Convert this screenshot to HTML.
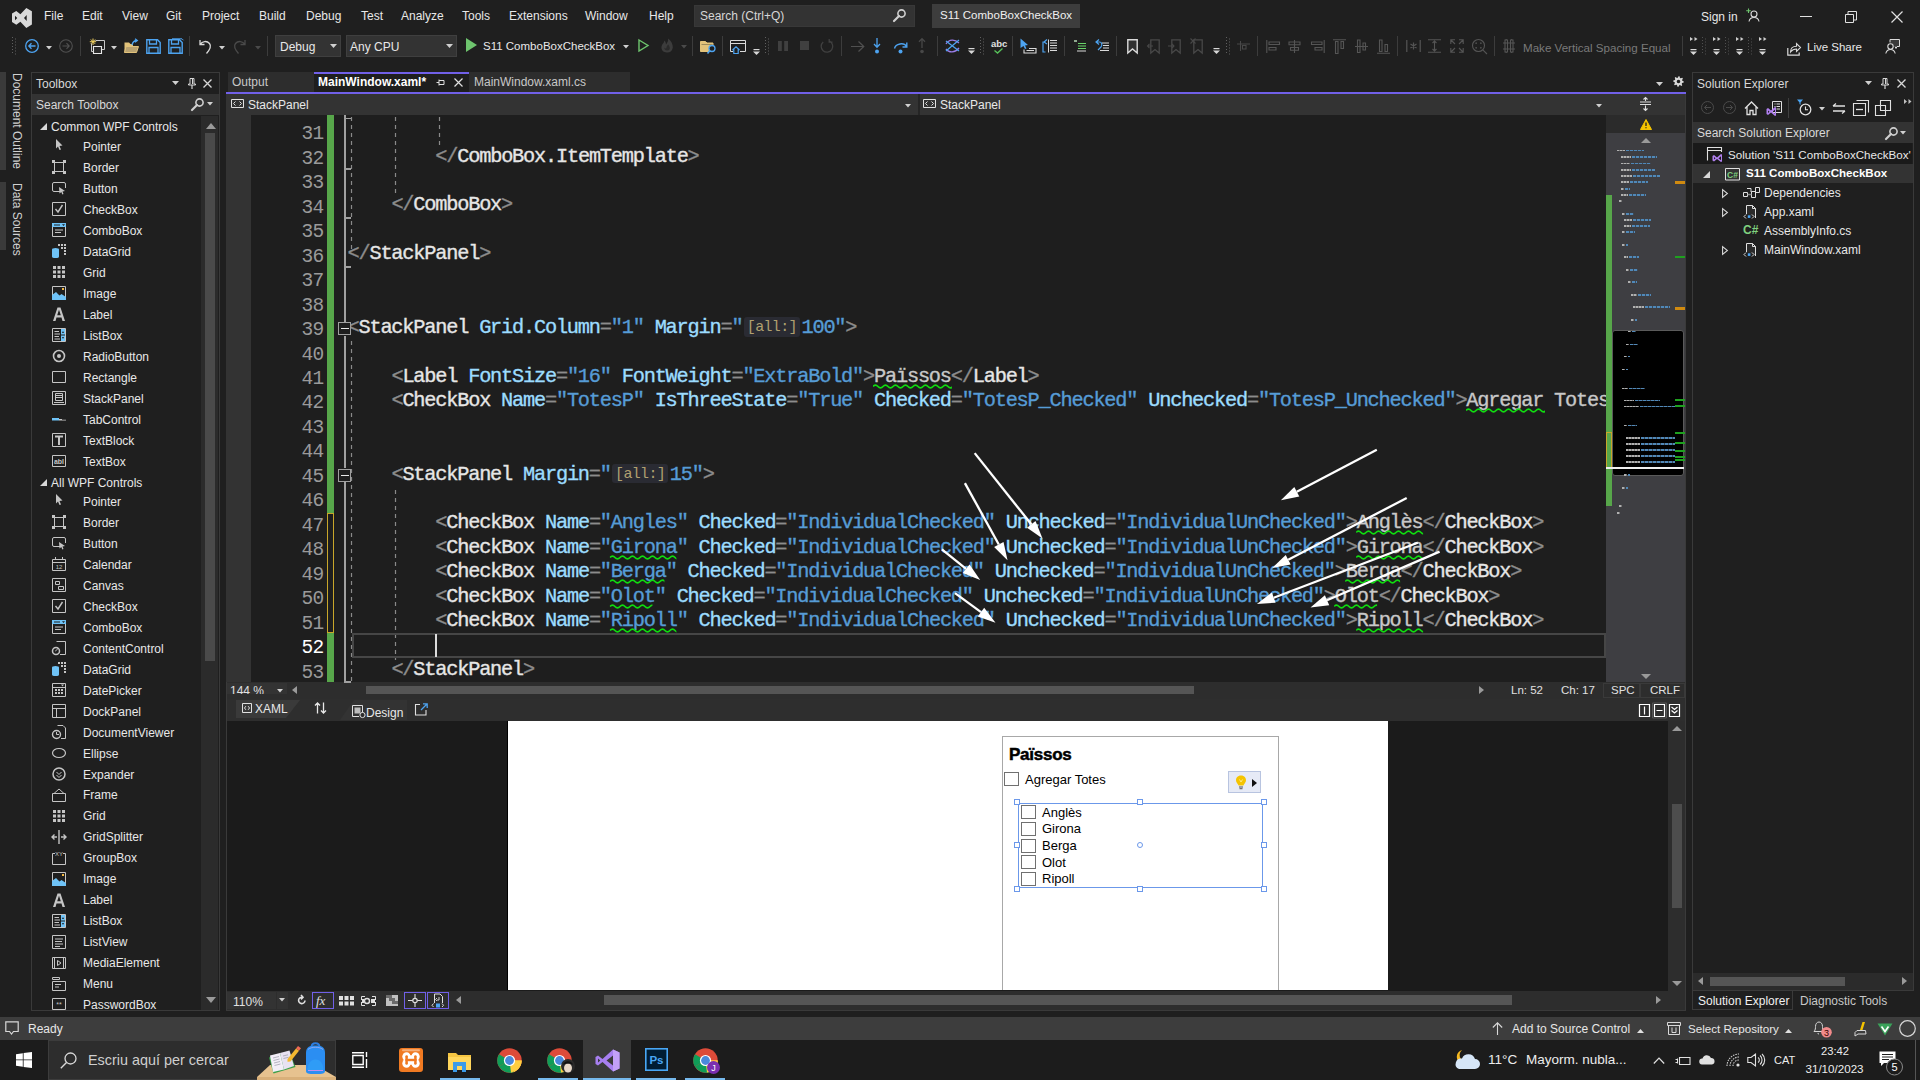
<!DOCTYPE html>
<html><head><meta charset="utf-8">
<style>
*{margin:0;padding:0;box-sizing:border-box}
html,body{width:1920px;height:1080px;overflow:hidden;background:#1f1f1f;font-family:"Liberation Sans",sans-serif;font-size:12px;color:#e6e6e6}
.a{position:absolute}
.t{position:absolute;white-space:nowrap;line-height:1}
svg{position:absolute;overflow:visible}
</style></head><body>

<div class="a" style="left:0px;top:0px;width:1920px;height:62px;background:#1f1f1f;"></div>
<svg style="left:0px;top:0px;" width="40" height="32" viewBox="0 0 40 32"><path d="M12 13.5 L16.3 11 L20.4 14.3 L26.3 7.9 L31.9 11.3 V24.5 L26.3 27.9 L20.4 21.7 L16.3 24.7 L12 22 Z M15 15.8 L17.3 18 L15 20.2 Z M26.7 15 L24 18 L26.7 21 Z" fill="#d9d9d9" fill-rule="evenodd"/></svg>
<div class="t" style="left:44px;top:9.84px;font-size:12px;color:#e8e8e8;font-family:'Liberation Sans',sans-serif;">File</div>
<div class="t" style="left:82px;top:9.84px;font-size:12px;color:#e8e8e8;font-family:'Liberation Sans',sans-serif;">Edit</div>
<div class="t" style="left:122px;top:9.84px;font-size:12px;color:#e8e8e8;font-family:'Liberation Sans',sans-serif;">View</div>
<div class="t" style="left:166px;top:9.84px;font-size:12px;color:#e8e8e8;font-family:'Liberation Sans',sans-serif;">Git</div>
<div class="t" style="left:202px;top:9.84px;font-size:12px;color:#e8e8e8;font-family:'Liberation Sans',sans-serif;">Project</div>
<div class="t" style="left:259px;top:9.84px;font-size:12px;color:#e8e8e8;font-family:'Liberation Sans',sans-serif;">Build</div>
<div class="t" style="left:306px;top:9.84px;font-size:12px;color:#e8e8e8;font-family:'Liberation Sans',sans-serif;">Debug</div>
<div class="t" style="left:361px;top:9.84px;font-size:12px;color:#e8e8e8;font-family:'Liberation Sans',sans-serif;">Test</div>
<div class="t" style="left:401px;top:9.84px;font-size:12px;color:#e8e8e8;font-family:'Liberation Sans',sans-serif;">Analyze</div>
<div class="t" style="left:462px;top:9.84px;font-size:12px;color:#e8e8e8;font-family:'Liberation Sans',sans-serif;">Tools</div>
<div class="t" style="left:509px;top:9.84px;font-size:12px;color:#e8e8e8;font-family:'Liberation Sans',sans-serif;">Extensions</div>
<div class="t" style="left:585px;top:9.84px;font-size:12px;color:#e8e8e8;font-family:'Liberation Sans',sans-serif;">Window</div>
<div class="t" style="left:649px;top:9.84px;font-size:12px;color:#e8e8e8;font-family:'Liberation Sans',sans-serif;">Help</div>
<div class="a" style="left:694px;top:5px;width:221px;height:22px;background:#333333;border:1px solid #383838;"></div>
<div class="t" style="left:700px;top:9.84px;font-size:12px;color:#d6d6d6;font-family:'Liberation Sans',sans-serif;">Search (Ctrl+Q)</div>
<div class="a" style="left:932px;top:4px;width:148px;height:24px;background:#3d3d3d;"></div>
<div class="t" style="left:940px;top:10.27px;font-size:11.5px;color:#f0f0f0;font-family:'Liberation Sans',sans-serif;">S11 ComboBoxCheckBox</div>
<div class="t" style="left:1701px;top:10.84px;font-size:12px;color:#e8e8e8;font-family:'Liberation Sans',sans-serif;">Sign in</div>
<div class="a" style="left:1800px;top:16px;width:12px;height:1px;background:#e0e0e0;"></div>
<svg style="left:1845px;top:11px;" width="12" height="12" viewBox="0 0 12 12"><path d="M0.5 3.5 H8.5 V11.5 H0.5 Z M3 3.5 V0.5 H11.5 V9 H8.5" fill="none" stroke="#e0e0e0" stroke-width="1"/></svg>
<svg style="left:1891px;top:11px;" width="12" height="12" viewBox="0 0 12 12"><path d="M0.5 0.5 L11.5 11.5 M11.5 0.5 L0.5 11.5" stroke="#e0e0e0" stroke-width="1.2"/></svg>
<div class="a" style="left:275px;top:35px;width:66px;height:22px;background:#333333;border:1px solid #3f3f3f;"></div>
<div class="t" style="left:280px;top:40.84px;font-size:12px;color:#e8e8e8;font-family:'Liberation Sans',sans-serif;">Debug</div>
<svg style="left:330px;top:44px;" width="7" height="4" viewBox="0 0 7 4"><path d="M0 0 H7 L3.5 4 Z" fill="#d0d0d0"/></svg>
<div class="a" style="left:346px;top:35px;width:111px;height:22px;background:#333333;border:1px solid #3f3f3f;"></div>
<div class="t" style="left:350px;top:40.84px;font-size:12px;color:#e8e8e8;font-family:'Liberation Sans',sans-serif;">Any CPU</div>
<svg style="left:446px;top:44px;" width="7" height="4" viewBox="0 0 7 4"><path d="M0 0 H7 L3.5 4 Z" fill="#d0d0d0"/></svg>
<svg style="left:466px;top:38px;" width="11" height="14" viewBox="0 0 11 14"><path d="M0 0 L11 7 L0 14 Z" fill="#6ec46e"/></svg>
<div class="t" style="left:483px;top:41.27px;font-size:11.5px;color:#e8e8e8;font-family:'Liberation Sans',sans-serif;">S11 ComboBoxCheckBox</div>
<div class="t" style="left:1523px;top:42.18px;font-size:11.6px;color:#7a7a7a;font-family:'Liberation Sans',sans-serif;">Make Vertical Spacing Equal</div>
<div class="t" style="left:1807px;top:42.27px;font-size:11.5px;color:#e8e8e8;font-family:'Liberation Sans',sans-serif;">Live Share</div>
<div class="a" style="left:0px;top:72px;width:6px;height:98px;background:#3a3a3a;"></div>
<div class="a" style="left:0px;top:182px;width:6px;height:68px;background:#3a3a3a;"></div>
<div class="t" style="left:0;top:0;font-size:12px;color:#d0d0d0;transform-origin:0 0;transform:translate(23px,73px) rotate(90deg);">Document Outline</div>
<div class="t" style="left:0;top:0;font-size:12px;color:#d0d0d0;transform-origin:0 0;transform:translate(23px,183px) rotate(90deg);">Data Sources</div>
<div class="a" style="left:31px;top:72px;width:189px;height:939px;background:#1f1f1f;border:1px solid #3a3a3a;"></div>
<div class="t" style="left:36px;top:77.84px;font-size:12px;color:#d8d8d8;font-family:'Liberation Sans',sans-serif;">Toolbox</div>
<div class="a" style="left:32px;top:94px;width:187px;height:21px;background:#333333;"></div>
<div class="t" style="left:36px;top:98.84px;font-size:12px;color:#d8d8d8;font-family:'Liberation Sans',sans-serif;">Search Toolbox</div>
<div class="a" style="left:201px;top:116px;width:17px;height:894px;background:#2b2b2b;"></div>
<div class="a" style="left:205px;top:133px;width:10px;height:528px;background:#4a4a4a;"></div>
<div class="t" style="left:51px;top:120.84px;font-size:12px;color:#e8e8e8;font-family:'Liberation Sans',sans-serif;">Common WPF Controls</div>
<svg style="left:40px;top:123px;" width="7" height="7" viewBox="0 0 7 7"><path d="M7 0 V7 H0 Z" fill="#d8d8d8"/></svg>
<div class="t" style="left:83px;top:141.04px;font-size:12px;color:#e8e8e8;font-family:'Liberation Sans',sans-serif;">Pointer</div>
<div class="t" style="left:83px;top:162.02px;font-size:12px;color:#e8e8e8;font-family:'Liberation Sans',sans-serif;">Border</div>
<div class="t" style="left:83px;top:183.00px;font-size:12px;color:#e8e8e8;font-family:'Liberation Sans',sans-serif;">Button</div>
<div class="t" style="left:83px;top:203.98px;font-size:12px;color:#e8e8e8;font-family:'Liberation Sans',sans-serif;">CheckBox</div>
<div class="t" style="left:83px;top:224.96px;font-size:12px;color:#e8e8e8;font-family:'Liberation Sans',sans-serif;">ComboBox</div>
<div class="t" style="left:83px;top:245.94px;font-size:12px;color:#e8e8e8;font-family:'Liberation Sans',sans-serif;">DataGrid</div>
<div class="t" style="left:83px;top:266.92px;font-size:12px;color:#e8e8e8;font-family:'Liberation Sans',sans-serif;">Grid</div>
<div class="t" style="left:83px;top:287.90px;font-size:12px;color:#e8e8e8;font-family:'Liberation Sans',sans-serif;">Image</div>
<div class="t" style="left:83px;top:308.88px;font-size:12px;color:#e8e8e8;font-family:'Liberation Sans',sans-serif;">Label</div>
<div class="t" style="left:83px;top:329.86px;font-size:12px;color:#e8e8e8;font-family:'Liberation Sans',sans-serif;">ListBox</div>
<div class="t" style="left:83px;top:350.84px;font-size:12px;color:#e8e8e8;font-family:'Liberation Sans',sans-serif;">RadioButton</div>
<div class="t" style="left:83px;top:371.82px;font-size:12px;color:#e8e8e8;font-family:'Liberation Sans',sans-serif;">Rectangle</div>
<div class="t" style="left:83px;top:392.80px;font-size:12px;color:#e8e8e8;font-family:'Liberation Sans',sans-serif;">StackPanel</div>
<div class="t" style="left:83px;top:413.78px;font-size:12px;color:#e8e8e8;font-family:'Liberation Sans',sans-serif;">TabControl</div>
<div class="t" style="left:83px;top:434.76px;font-size:12px;color:#e8e8e8;font-family:'Liberation Sans',sans-serif;">TextBlock</div>
<div class="t" style="left:83px;top:455.74px;font-size:12px;color:#e8e8e8;font-family:'Liberation Sans',sans-serif;">TextBox</div>
<div class="t" style="left:51px;top:476.84px;font-size:12px;color:#e8e8e8;font-family:'Liberation Sans',sans-serif;">All WPF Controls</div>
<svg style="left:40px;top:479px;" width="7" height="7" viewBox="0 0 7 7"><path d="M7 0 V7 H0 Z" fill="#d8d8d8"/></svg>
<div class="t" style="left:83px;top:496.04px;font-size:12px;color:#e8e8e8;font-family:'Liberation Sans',sans-serif;">Pointer</div>
<div class="t" style="left:83px;top:517.00px;font-size:12px;color:#e8e8e8;font-family:'Liberation Sans',sans-serif;">Border</div>
<div class="t" style="left:83px;top:537.96px;font-size:12px;color:#e8e8e8;font-family:'Liberation Sans',sans-serif;">Button</div>
<div class="t" style="left:83px;top:558.92px;font-size:12px;color:#e8e8e8;font-family:'Liberation Sans',sans-serif;">Calendar</div>
<div class="t" style="left:83px;top:579.88px;font-size:12px;color:#e8e8e8;font-family:'Liberation Sans',sans-serif;">Canvas</div>
<div class="t" style="left:83px;top:600.84px;font-size:12px;color:#e8e8e8;font-family:'Liberation Sans',sans-serif;">CheckBox</div>
<div class="t" style="left:83px;top:621.80px;font-size:12px;color:#e8e8e8;font-family:'Liberation Sans',sans-serif;">ComboBox</div>
<div class="t" style="left:83px;top:642.76px;font-size:12px;color:#e8e8e8;font-family:'Liberation Sans',sans-serif;">ContentControl</div>
<div class="t" style="left:83px;top:663.72px;font-size:12px;color:#e8e8e8;font-family:'Liberation Sans',sans-serif;">DataGrid</div>
<div class="t" style="left:83px;top:684.68px;font-size:12px;color:#e8e8e8;font-family:'Liberation Sans',sans-serif;">DatePicker</div>
<div class="t" style="left:83px;top:705.64px;font-size:12px;color:#e8e8e8;font-family:'Liberation Sans',sans-serif;">DockPanel</div>
<div class="t" style="left:83px;top:726.60px;font-size:12px;color:#e8e8e8;font-family:'Liberation Sans',sans-serif;">DocumentViewer</div>
<div class="t" style="left:83px;top:747.56px;font-size:12px;color:#e8e8e8;font-family:'Liberation Sans',sans-serif;">Ellipse</div>
<div class="t" style="left:83px;top:768.52px;font-size:12px;color:#e8e8e8;font-family:'Liberation Sans',sans-serif;">Expander</div>
<div class="t" style="left:83px;top:789.48px;font-size:12px;color:#e8e8e8;font-family:'Liberation Sans',sans-serif;">Frame</div>
<div class="t" style="left:83px;top:810.44px;font-size:12px;color:#e8e8e8;font-family:'Liberation Sans',sans-serif;">Grid</div>
<div class="t" style="left:83px;top:831.40px;font-size:12px;color:#e8e8e8;font-family:'Liberation Sans',sans-serif;">GridSplitter</div>
<div class="t" style="left:83px;top:852.36px;font-size:12px;color:#e8e8e8;font-family:'Liberation Sans',sans-serif;">GroupBox</div>
<div class="t" style="left:83px;top:873.32px;font-size:12px;color:#e8e8e8;font-family:'Liberation Sans',sans-serif;">Image</div>
<div class="t" style="left:83px;top:894.28px;font-size:12px;color:#e8e8e8;font-family:'Liberation Sans',sans-serif;">Label</div>
<div class="t" style="left:83px;top:915.24px;font-size:12px;color:#e8e8e8;font-family:'Liberation Sans',sans-serif;">ListBox</div>
<div class="t" style="left:83px;top:936.20px;font-size:12px;color:#e8e8e8;font-family:'Liberation Sans',sans-serif;">ListView</div>
<div class="t" style="left:83px;top:957.16px;font-size:12px;color:#e8e8e8;font-family:'Liberation Sans',sans-serif;">MediaElement</div>
<div class="t" style="left:83px;top:978.12px;font-size:12px;color:#e8e8e8;font-family:'Liberation Sans',sans-serif;">Menu</div>
<div class="t" style="left:83px;top:999.08px;font-size:12px;color:#e8e8e8;font-family:'Liberation Sans',sans-serif;">PasswordBox</div>
<div class="a" style="left:32px;top:1010px;width:187px;height:1px;background:#3a3a3a;"></div>
<div class="a" style="left:226px;top:72px;width:1460px;height:939px;background:#1e1e1e;"></div>
<div class="a" style="left:226px;top:72px;width:1460px;height:20px;background:#1f1f1f;"></div>
<div class="a" style="left:228px;top:72px;width:86px;height:20px;background:#2d2d2d;"></div>
<div class="t" style="left:232px;top:76.34px;font-size:12px;color:#c8c8c8;font-family:'Liberation Sans',sans-serif;">Output</div>
<div class="a" style="left:314px;top:72px;width:155px;height:20px;background:#1e1e1e;"></div>
<div class="a" style="left:314px;top:72px;width:155px;height:2px;background:#7160e8;"></div>
<div class="t" style="left:318px;top:76.34px;font-size:12px;color:#ffffff;font-family:'Liberation Sans',sans-serif;font-weight:bold;">MainWindow.xaml*</div>
<div class="a" style="left:469px;top:72px;width:161px;height:20px;background:#2d2d2d;"></div>
<div class="t" style="left:474px;top:76.34px;font-size:12px;color:#c8c8c8;font-family:'Liberation Sans',sans-serif;">MainWindow.xaml.cs</div>
<div class="a" style="left:226px;top:92px;width:1460px;height:2px;background:#7160e8;"></div>
<div class="a" style="left:226px;top:94px;width:1460px;height:21px;background:#333333;"></div>
<div class="a" style="left:918px;top:94px;width:2px;height:21px;background:#252525;"></div>
<div class="a" style="left:1606px;top:94px;width:2px;height:21px;background:#252525;"></div>
<div class="t" style="left:248px;top:98.84px;font-size:12px;color:#e8e8e8;font-family:'Liberation Sans',sans-serif;">StackPanel</div>
<div class="t" style="left:940px;top:98.84px;font-size:12px;color:#e8e8e8;font-family:'Liberation Sans',sans-serif;">StackPanel</div>
<div class="a" style="left:226px;top:115px;width:1380px;height:567px;background:#1e1e1e;"></div>
<div class="a" style="left:226px;top:115px;width:25px;height:567px;background:#333333;"></div>
<div class="a" style="left:1606px;top:115px;width:80px;height:18px;background:#2b2b2b;"></div>
<div class="a" style="left:1606px;top:133px;width:80px;height:549px;background:#3e3e42;"></div>
<div class="a" style="left:226px;top:682px;width:1460px;height:12px;background:#2d2d2d;"></div>
<div class="a" style="left:227px;top:683px;width:60px;height:15px;background:#333333;"></div>
<div class="t" style="left:230px;top:684.84px;font-size:12px;color:#e0e0e0;font-family:'Liberation Sans',sans-serif;">144 %</div>
<div class="a" style="left:366px;top:686px;width:828px;height:8px;background:#555555;"></div>
<div class="a" style="left:226px;top:694px;width:1460px;height:5px;background:#2d2d2d;"></div>
<div class="a" style="left:1500px;top:682px;width:186px;height:17px;background:#2d2d2d;"></div>
<div class="t" style="left:1511px;top:685.27px;font-size:11.5px;color:#e0e0e0;font-family:'Liberation Sans',sans-serif;">Ln: 52</div>
<div class="t" style="left:1561px;top:685.27px;font-size:11.5px;color:#e0e0e0;font-family:'Liberation Sans',sans-serif;">Ch: 17</div>
<div class="t" style="left:1611px;top:685.27px;font-size:11.5px;color:#e0e0e0;font-family:'Liberation Sans',sans-serif;">SPC</div>
<div class="t" style="left:1650px;top:685.27px;font-size:11.5px;color:#e0e0e0;font-family:'Liberation Sans',sans-serif;">CRLF</div>
<div class="a" style="left:226px;top:699px;width:1460px;height:22px;background:#2e2e2e;"></div>
<div class="a" style="left:226px;top:721px;width:1442px;height:270px;background:#1b1b1b;"></div>
<div class="a" style="left:507px;top:721px;width:881px;height:269px;background:#ffffff;"></div>
<div class="a" style="left:507px;top:721px;width:1px;height:269px;background:#000000;"></div>
<div class="a" style="left:1668px;top:721px;width:18px;height:270px;background:#2d2d2d;"></div>
<div class="a" style="left:1672px;top:804px;width:10px;height:104px;background:#4d4d4d;"></div>
<div class="a" style="left:226px;top:991px;width:1460px;height:20px;background:#2d2d2d;"></div>
<div class="a" style="left:227px;top:992px;width:61px;height:17px;background:#333333;"></div>
<div class="t" style="left:233px;top:995.84px;font-size:12px;color:#e0e0e0;font-family:'Liberation Sans',sans-serif;">110%</div>
<div class="a" style="left:604px;top:995px;width:908px;height:10px;background:#555555;"></div>
<div class="a" style="left:1692px;top:72px;width:222px;height:919px;background:#1f1f1f;border:1px solid #3a3a3a;"></div>
<div class="t" style="left:1697px;top:77.84px;font-size:12px;color:#d8d8d8;font-family:'Liberation Sans',sans-serif;">Solution Explorer</div>
<div class="a" style="left:1693px;top:122px;width:220px;height:21px;background:#333333;"></div>
<div class="t" style="left:1697px;top:126.84px;font-size:12px;color:#d8d8d8;font-family:'Liberation Sans',sans-serif;">Search Solution Explorer</div>
<div class="a" style="left:1693px;top:143px;width:220px;height:21px;background:#1a1a1a;"></div>
<div class="t" style="left:1728px;top:149.18px;font-size:11.6px;color:#e8e8e8;font-family:'Liberation Sans',sans-serif;">Solution &#x27;S11 ComboBoxCheckBox&#x27;</div>
<div class="a" style="left:1693px;top:164px;width:220px;height:19px;background:#333333;"></div>
<div class="t" style="left:1746px;top:168.22px;font-size:11.55px;color:#ffffff;font-family:'Liberation Sans',sans-serif;font-weight:bold;">S11 ComboBoxCheckBox</div>
<div class="t" style="left:1764px;top:186.84px;font-size:12px;color:#e8e8e8;font-family:'Liberation Sans',sans-serif;">Dependencies</div>
<div class="t" style="left:1764px;top:205.84px;font-size:12px;color:#e8e8e8;font-family:'Liberation Sans',sans-serif;">App.xaml</div>
<div class="t" style="left:1764px;top:224.84px;font-size:12px;color:#e8e8e8;font-family:'Liberation Sans',sans-serif;">AssemblyInfo.cs</div>
<div class="t" style="left:1764px;top:243.84px;font-size:12px;color:#e8e8e8;font-family:'Liberation Sans',sans-serif;">MainWindow.xaml</div>
<div class="a" style="left:1693px;top:973px;width:220px;height:17px;background:#2b2b2b;"></div>
<div class="a" style="left:1710px;top:977px;width:135px;height:9px;background:#555555;"></div>
<div class="a" style="left:1692px;top:990px;width:101px;height:20px;background:#1f1f1f;border:1px solid #3a3a3a;"></div>
<div class="t" style="left:1698px;top:994.84px;font-size:12px;color:#f0f0f0;font-family:'Liberation Sans',sans-serif;">Solution Explorer</div>
<div class="t" style="left:1800px;top:994.84px;font-size:12px;color:#c8c8c8;font-family:'Liberation Sans',sans-serif;">Diagnostic Tools</div>
<div class="a" style="left:0px;top:1017px;width:1920px;height:23px;background:#3d3d3d;"></div>
<svg style="left:5px;top:1021px;" width="15" height="15" viewBox="0 0 15 15"><path d="M0.8 0.8 H13.2 V10.5 H8.5 L6.5 13 L4.5 10.5 H0.8 Z" fill="none" stroke="#d8d8d8" stroke-width="1.2"/></svg>
<div class="t" style="left:28px;top:1022.84px;font-size:12px;color:#e8e8e8;font-family:'Liberation Sans',sans-serif;">Ready</div>
<svg style="left:1492px;top:1022px;" width="11" height="13" viewBox="0 0 11 13"><path d="M5.5 13 V1 M0.8 5.5 L5.5 0.8 L10.2 5.5" fill="none" stroke="#d8d8d8" stroke-width="1.1"/></svg>
<div class="t" style="left:1512px;top:1022.84px;font-size:12px;color:#e8e8e8;font-family:'Liberation Sans',sans-serif;">Add to Source Control</div>
<svg style="left:1637px;top:1029px;" width="7" height="4" viewBox="0 0 7 4"><path d="M0 4 L3.5 0 L7 4 Z" fill="#e0e0e0"/></svg>
<svg style="left:1667px;top:1022px;" width="14" height="13" viewBox="0 0 14 13"><path d="M0.5 0.5 H13.5 V3.5 H0.5 Z M1.5 3.5 V12.5 H12.5 V3.5 M5 5.5 V10.5 H9 V5.5" fill="none" stroke="#d8d8d8" stroke-width="1"/></svg>
<div class="t" style="left:1688px;top:1023.18px;font-size:11.6px;color:#e8e8e8;font-family:'Liberation Sans',sans-serif;">Select Repository</div>
<svg style="left:1785px;top:1029px;" width="7" height="4" viewBox="0 0 7 4"><path d="M0 4 L3.5 0 L7 4 Z" fill="#e0e0e0"/></svg>
<svg style="left:1813px;top:1021px;" width="20" height="17" viewBox="0 0 20 17"><path d="M1 10.5 H11 C9.5 9 9.5 7 9.5 5.5 C9.5 2.8 8 1 6 1 C4 1 2.5 2.8 2.5 5.5 C2.5 7 2.5 9 1 10.5 Z M4.8 12 C5 12.8 5.5 13.2 6 13.2" fill="none" stroke="#d8d8d8" stroke-width="1"/><circle cx="13.5" cy="11.2" r="5.3" fill="#f28b8b"/><text x="13.5" y="14.6" font-size="9" font-family="Liberation Sans" fill="#3a0000" text-anchor="middle">3</text></svg>
<svg style="left:1854px;top:1021px;" width="13" height="16" viewBox="0 0 13 16"><path d="M1 15 V11.5 L3 9.5 H11.5 L12 13 H4 Z" fill="none" stroke="#d8d8d8" stroke-width="1"/><path d="M6 9 L8.5 1 H11 L8.5 9 Z" fill="#f5c400"/></svg>
<svg style="left:1877px;top:1023px;" width="16" height="13" viewBox="0 0 16 13"><path d="M0.5 0.5 H15.5 L8 12.5 Z" fill="#3aa35a"/><path d="M4.5 3.5 L8 8.5 L11.5 3.5" fill="none" stroke="#ffffff" stroke-width="1.6"/></svg>
<svg style="left:1899px;top:1020px;" width="17" height="17" viewBox="0 0 17 17"><circle cx="8.5" cy="8.5" r="7.8" fill="none" stroke="#d8d8d8" stroke-width="1.2"/></svg>
<div class="a" style="left:0px;top:1040px;width:1920px;height:40px;background:#1c1c1c;"></div>
<svg style="left:16px;top:1052px;" width="16" height="16" viewBox="0 0 16 16"><path d="M0 2.2 L6.8 1.2 V7.5 H0 Z M7.6 1.1 L16 0 V7.5 H7.6 Z M0 8.3 H6.8 V14.8 L0 13.8 Z M7.6 8.3 H16 V16 L7.6 14.9 Z" fill="#ffffff"/></svg>
<div class="a" style="left:48px;top:1040px;width:288px;height:40px;background:#2d2d2d;border:1px solid #3c3c3c;"></div>
<svg style="left:60px;top:1052px;" width="17" height="17" viewBox="0 0 17 17"><circle cx="10.5" cy="6.5" r="5.5" fill="none" stroke="#d8d8d8" stroke-width="1.3"/><path d="M6.5 10.5 L0.8 16.2" stroke="#d8d8d8" stroke-width="1.4"/></svg>
<div class="t" style="left:88px;top:1053.31px;font-size:14.4px;color:#cfcfcf;font-family:'Liberation Sans',sans-serif;">Escriu aquí per cercar</div>
<svg style="left:250px;top:1040px;" width="90" height="40" viewBox="0 0 90 40"><path d="M20 25 H65 L86 37 V40 H7 V37 Z" fill="#e7c28f"/><path d="M7 37 H86 V40 H7 Z" fill="#d9b07a"/><path d="M19 17.5 L39 11 L45.5 27 L23.5 33.5 Z" fill="#3aa04a"/><path d="M20 15.5 L30 13 L34 29.5 L23 32 Z" fill="#f3eef8"/><path d="M30 13 L39.5 10.5 L44 26 L34 29.5 Z" fill="#e8e2f2"/><path d="M23 18 L29 16.5 M23.5 20.5 L29.5 19 M24 23 L30 21.5 M24.5 25.5 L30.5 24 M33 16 L38 14.8 M33.5 18.5 L38.5 17.3" stroke="#9a9aa8" stroke-width="0.7"/><path d="M37.5 19 L46 8.5 L49 10.8 L40.5 21.5 L37.5 21.8 Z" fill="#f2b830"/><path d="M46 8.5 L48 6 L51 8.3 L49 10.8 Z" fill="#ee6a55"/><path d="M61.5 7 C61.5 2 69.5 2 69.5 7" fill="none" stroke="#2d7ee0" stroke-width="1.8"/><path d="M56 13 C56 7 59.5 5.5 65.5 5.5 C71.5 5.5 75 7 75 13 V31 C75 33.5 73 34 65.5 34 C58 34 56 33.5 56 31 Z" fill="#2b8ef2"/><path d="M58 9.5 C61 6.5 70 6.5 73 9.5" fill="none" stroke="#c9b8f0" stroke-width="0.6"/><path d="M57.5 30.5 C57.5 24 60.5 19.5 65.5 19.5 C70.5 19.5 73.5 24 73.5 30.5" fill="#2f9cf6"/><path d="M58 30.5 H73" stroke="#e58ef0" stroke-width="0.8"/></svg>
<svg style="left:352px;top:1052px;" width="16" height="16" viewBox="0 0 16 16"><path d="M0.8 3.5 H11.2 V12.5 H0.8 Z M0 0.8 H12 M0 15.2 H12 M14.5 0 V5 M14.5 7 V16" fill="none" stroke="#ffffff" stroke-width="1.4"/></svg>
<svg style="left:399px;top:1048px;" width="24" height="24" viewBox="0 0 24 24"><rect x="0" y="0" width="24" height="24" rx="3" fill="#f07a22"/><rect x="3" y="1.2" width="18" height="2" rx="1" fill="#f6b07a"/><g fill="#ffffff"><circle cx="7.6" cy="8.6" r="4.3"/><circle cx="7.6" cy="15.4" r="4.3"/><circle cx="16.4" cy="8.6" r="4.3"/><circle cx="16.4" cy="15.4" r="4.3"/><rect x="7.6" y="7" width="8.8" height="10"/></g><g fill="#f07a22"><path d="M9.5 4 L12 7.8 L14.5 4 Z M9.5 20 L12 16.2 L14.5 20 Z"/><rect x="6.4" y="8.6" width="2.4" height="6.8"/><rect x="15.2" y="8.6" width="2.4" height="6.8"/><rect x="6.4" y="10.8" width="11.2" height="2.4"/><circle cx="7.6" cy="8.6" r="1.25"/><circle cx="7.6" cy="15.4" r="1.25"/><circle cx="16.4" cy="8.6" r="1.25"/><circle cx="16.4" cy="15.4" r="1.25"/></g></svg>
<svg style="left:448px;top:1051px;" width="23" height="21" viewBox="0 0 23 21"><path d="M0 2 H8 L10 4 H23 V19 H0 Z" fill="#f5c542"/><path d="M0 6 H23 V19 H0 Z" fill="#ffd65c"/><path d="M5 11 H18 V21 H14 V15 H9 V21 H5 Z" fill="#3b9ae8"/></svg>
<svg style="left:497px;top:1048px;" width="25" height="25" viewBox="0 0 25 25"><circle cx="12.5" cy="12.5" r="12.2" fill="#dd4b39"/><path d="M12.5 12.5 L1.9 18.6 A12.2 12.2 0 0 1 2 6.2 Z" fill="#109d58"/><path d="M12.5 12.5 L1.9 18.6 A12.2 12.2 0 0 0 17 23.9 Z" fill="#109d58"/><path d="M12.5 12.5 L24.7 12.5 A12.2 12.2 0 0 1 12.5 24.7 L17 23.9 Z" fill="#ffcd40"/><path d="M12.5 12.5 H24.7 A12.2 12.2 0 0 1 14 24.6 Z" fill="#ffcd40"/><circle cx="12.5" cy="12.5" r="5.6" fill="#ffffff"/><circle cx="12.5" cy="12.5" r="4.4" fill="#4a89dc"/></svg>
<svg style="left:547px;top:1048px;" width="25" height="25" viewBox="0 0 25 25"><circle cx="12.5" cy="12.5" r="12.2" fill="#dd4b39"/><path d="M12.5 12.5 L1.9 18.6 A12.2 12.2 0 0 1 2 6.2 Z" fill="#109d58"/><path d="M12.5 12.5 L1.9 18.6 A12.2 12.2 0 0 0 17 23.9 Z" fill="#109d58"/><path d="M12.5 12.5 L24.7 12.5 A12.2 12.2 0 0 1 12.5 24.7 L17 23.9 Z" fill="#ffcd40"/><path d="M12.5 12.5 H24.7 A12.2 12.2 0 0 1 14 24.6 Z" fill="#ffcd40"/><circle cx="12.5" cy="12.5" r="5.6" fill="#ffffff"/><circle cx="12.5" cy="12.5" r="4.4" fill="#4a89dc"/></svg>
<svg style="left:693px;top:1048px;" width="25" height="25" viewBox="0 0 25 25"><circle cx="12.5" cy="12.5" r="12.2" fill="#dd4b39"/><path d="M12.5 12.5 L1.9 18.6 A12.2 12.2 0 0 1 2 6.2 Z" fill="#109d58"/><path d="M12.5 12.5 L1.9 18.6 A12.2 12.2 0 0 0 17 23.9 Z" fill="#109d58"/><path d="M12.5 12.5 L24.7 12.5 A12.2 12.2 0 0 1 12.5 24.7 L17 23.9 Z" fill="#ffcd40"/><path d="M12.5 12.5 H24.7 A12.2 12.2 0 0 1 14 24.6 Z" fill="#ffcd40"/><circle cx="12.5" cy="12.5" r="5.6" fill="#ffffff"/><circle cx="12.5" cy="12.5" r="4.4" fill="#4a89dc"/></svg>
<svg style="left:561px;top:1059px;" width="14" height="14" viewBox="0 0 14 14"><circle cx="7" cy="7" r="7" fill="#2a2a2a"/><ellipse cx="7" cy="9" rx="4" ry="4.5" fill="#e8d8c8"/><path d="M2 6 C3 1 11 1 12 6 C10 4 4 4 2 6 Z" fill="#111"/></svg>
<svg style="left:707px;top:1061px;" width="13" height="13" viewBox="0 0 13 13"><circle cx="6.5" cy="6.5" r="6.5" fill="#7b2fb0"/><text x="6.5" y="10" font-size="9" font-family="Liberation Sans" fill="#fff" text-anchor="middle">J</text></svg>
<div class="a" style="left:583px;top:1040px;width:48px;height:40px;background:#3a3a3a;"></div>
<svg style="left:595px;top:1049px;" width="25" height="23" viewBox="0 0 25 23"><path d="M18 0.5 L24.5 3.5 V19.5 L18 22.5 L7.5 13 L3 16.5 L0.5 15 V8 L3 6.5 L7.5 10 Z M18 6.5 L11.5 11.5 L18 16.5 Z M3 9.5 V13.5 L5.3 11.5 Z" fill="#a77ff0" fill-rule="evenodd"/><path d="M18 0.5 L24.5 3.5 V19.5 L18 22.5 Z" fill="#c2a0f8"/></svg>
<svg style="left:645px;top:1048px;" width="23" height="23" viewBox="0 0 23 23"><rect x="0.8" y="0.8" width="21.4" height="21.4" fill="#001d34" stroke="#49a7f5" stroke-width="1.6"/><text x="11.5" y="16" font-size="11.5" font-weight="bold" font-family="Liberation Sans" fill="#49a7f5" text-anchor="middle">Ps</text></svg>
<div class="a" style="left:440px;top:1078px;width:40px;height:2px;background:#76b9ed;"></div>
<div class="a" style="left:538px;top:1078px;width:40px;height:2px;background:#76b9ed;"></div>
<div class="a" style="left:583px;top:1078px;width:48px;height:2px;background:#76b9ed;"></div>
<div class="a" style="left:636px;top:1078px;width:40px;height:2px;background:#76b9ed;"></div>
<div class="a" style="left:685px;top:1078px;width:40px;height:2px;background:#76b9ed;"></div>
<svg style="left:1453px;top:1047px;" width="27" height="24" viewBox="0 0 27 24"><path d="M9 3 A7 7 0 1 0 17 13 A6 6 0 0 1 9 3 Z" fill="#f5b820"/><path d="M6 22 H22 A5 5 0 0 0 22 12 A7 7 0 0 0 9 11.5 A5.5 5.5 0 0 0 6 22 Z" fill="#d6e6f8"/></svg>
<div class="t" style="left:1488px;top:1053.27px;font-size:13.5px;color:#ececec;font-family:'Liberation Sans',sans-serif;">11°C</div>
<div class="t" style="left:1526px;top:1053.27px;font-size:13.5px;color:#ececec;font-family:'Liberation Sans',sans-serif;">Mayorm. nubla...</div>
<svg style="left:1653px;top:1057px;" width="12" height="7" viewBox="0 0 12 7"><path d="M0.8 6.5 L6 1 L11.2 6.5" fill="none" stroke="#e0e0e0" stroke-width="1.2"/></svg>
<svg style="left:1675px;top:1054px;" width="16" height="13" viewBox="0 0 16 13"><path d="M4.5 3.5 H15 V10.5 H4.5 Z M2.5 5.5 H0.5 M2.5 8.5 H0.5 M2.5 4.5 V9.5" fill="none" stroke="#e0e0e0" stroke-width="1.1"/></svg>
<svg style="left:1699px;top:1055px;" width="16" height="10" viewBox="0 0 16 10"><path d="M3 9.5 A3 3 0 0 1 3.5 3.5 A4.5 4.5 0 0 1 12 3 A3.3 3.3 0 0 1 13 9.5 Z" fill="#e0e0e0"/></svg>
<svg style="left:1726px;top:1053px;" width="14" height="14" viewBox="0 0 14 14"><path d="M1 13 A12 12 0 0 1 13 1 M4 13 A9 9 0 0 1 13 4 M7 13 A6 6 0 0 1 13 7" fill="none" stroke="#d0d0d0" stroke-width="1.1" stroke-dasharray="1.5 1"/><circle cx="12" cy="12" r="1.6" fill="#e0e0e0"/></svg>
<svg style="left:1747px;top:1053px;" width="17" height="14" viewBox="0 0 17 14"><path d="M0.8 4.5 H4 L8.5 1 V13 L4 9.5 H0.8 Z M11 4.5 A3 3 0 0 1 11 9.5 M13 2.5 A6 6 0 0 1 13 11.5 M15 1 A8 8 0 0 1 15 13" fill="none" stroke="#e0e0e0" stroke-width="1.1"/></svg>
<div class="t" style="left:1774px;top:1054.89px;font-size:11px;color:#ececec;font-family:'Liberation Sans',sans-serif;">CAT</div>
<div class="t" style="left:1821px;top:1045.52px;font-size:11.2px;color:#ececec;font-family:'Liberation Sans',sans-serif;">23:42</div>
<div class="t" style="left:1805.5px;top:1062.88px;font-size:11.6px;color:#ececec;font-family:'Liberation Sans',sans-serif;">31/10/2023</div>
<svg style="left:1879px;top:1051px;" width="26" height="26" viewBox="0 0 26 26"><path d="M0.5 0.5 H16.5 V12 H5 L2 15 V12 H0.5 Z" fill="#ffffff"/><path d="M3 3.5 H14 M3 6 H14 M3 8.5 H10" stroke="#1c1c1c" stroke-width="1"/><circle cx="15.5" cy="16" r="8" fill="#1c1c1c" stroke="#8a8a8a" stroke-width="1"/><text x="15.5" y="20" font-size="11" font-family="Liberation Sans" fill="#ffffff" text-anchor="middle">5</text></svg>
<div class="a" style="left:1915px;top:1040px;width:1px;height:40px;background:#555555;"></div>
<div class="a" style="left:327px;top:115px;width:7px;height:398px;background:#57a64a;"></div>
<div class="a" style="left:327px;top:513px;width:7px;height:120px;border:1px solid #c8a62a;box-sizing:border-box;"></div>
<div class="a" style="left:327px;top:633px;width:7px;height:49px;background:#57a64a;"></div>
<div class="t" style="left:323.5px;top:125.39px;font-size:19.5px;color:#9a9a9a;font-family:'Liberation Mono',monospace;letter-spacing:-0.7px;transform:translateX(-100%);">31</div>
<div class="t" style="left:323.5px;top:149.85px;font-size:19.5px;color:#9a9a9a;font-family:'Liberation Mono',monospace;letter-spacing:-0.7px;transform:translateX(-100%);">32</div>
<div class="t" style="left:323.5px;top:174.31px;font-size:19.5px;color:#9a9a9a;font-family:'Liberation Mono',monospace;letter-spacing:-0.7px;transform:translateX(-100%);">33</div>
<div class="t" style="left:323.5px;top:198.77px;font-size:19.5px;color:#9a9a9a;font-family:'Liberation Mono',monospace;letter-spacing:-0.7px;transform:translateX(-100%);">34</div>
<div class="t" style="left:323.5px;top:223.23px;font-size:19.5px;color:#9a9a9a;font-family:'Liberation Mono',monospace;letter-spacing:-0.7px;transform:translateX(-100%);">35</div>
<div class="t" style="left:323.5px;top:247.69px;font-size:19.5px;color:#9a9a9a;font-family:'Liberation Mono',monospace;letter-spacing:-0.7px;transform:translateX(-100%);">36</div>
<div class="t" style="left:323.5px;top:272.15px;font-size:19.5px;color:#9a9a9a;font-family:'Liberation Mono',monospace;letter-spacing:-0.7px;transform:translateX(-100%);">37</div>
<div class="t" style="left:323.5px;top:296.61px;font-size:19.5px;color:#9a9a9a;font-family:'Liberation Mono',monospace;letter-spacing:-0.7px;transform:translateX(-100%);">38</div>
<div class="t" style="left:323.5px;top:321.07px;font-size:19.5px;color:#9a9a9a;font-family:'Liberation Mono',monospace;letter-spacing:-0.7px;transform:translateX(-100%);">39</div>
<div class="t" style="left:323.5px;top:345.53px;font-size:19.5px;color:#9a9a9a;font-family:'Liberation Mono',monospace;letter-spacing:-0.7px;transform:translateX(-100%);">40</div>
<div class="t" style="left:323.5px;top:369.99px;font-size:19.5px;color:#9a9a9a;font-family:'Liberation Mono',monospace;letter-spacing:-0.7px;transform:translateX(-100%);">41</div>
<div class="t" style="left:323.5px;top:394.45px;font-size:19.5px;color:#9a9a9a;font-family:'Liberation Mono',monospace;letter-spacing:-0.7px;transform:translateX(-100%);">42</div>
<div class="t" style="left:323.5px;top:418.91px;font-size:19.5px;color:#9a9a9a;font-family:'Liberation Mono',monospace;letter-spacing:-0.7px;transform:translateX(-100%);">43</div>
<div class="t" style="left:323.5px;top:443.37px;font-size:19.5px;color:#9a9a9a;font-family:'Liberation Mono',monospace;letter-spacing:-0.7px;transform:translateX(-100%);">44</div>
<div class="t" style="left:323.5px;top:467.83px;font-size:19.5px;color:#9a9a9a;font-family:'Liberation Mono',monospace;letter-spacing:-0.7px;transform:translateX(-100%);">45</div>
<div class="t" style="left:323.5px;top:492.29px;font-size:19.5px;color:#9a9a9a;font-family:'Liberation Mono',monospace;letter-spacing:-0.7px;transform:translateX(-100%);">46</div>
<div class="t" style="left:323.5px;top:516.75px;font-size:19.5px;color:#9a9a9a;font-family:'Liberation Mono',monospace;letter-spacing:-0.7px;transform:translateX(-100%);">47</div>
<div class="t" style="left:323.5px;top:541.21px;font-size:19.5px;color:#9a9a9a;font-family:'Liberation Mono',monospace;letter-spacing:-0.7px;transform:translateX(-100%);">48</div>
<div class="t" style="left:323.5px;top:565.67px;font-size:19.5px;color:#9a9a9a;font-family:'Liberation Mono',monospace;letter-spacing:-0.7px;transform:translateX(-100%);">49</div>
<div class="t" style="left:323.5px;top:590.13px;font-size:19.5px;color:#9a9a9a;font-family:'Liberation Mono',monospace;letter-spacing:-0.7px;transform:translateX(-100%);">50</div>
<div class="t" style="left:323.5px;top:614.59px;font-size:19.5px;color:#9a9a9a;font-family:'Liberation Mono',monospace;letter-spacing:-0.7px;transform:translateX(-100%);">51</div>
<div class="t" style="left:323.5px;top:639.05px;font-size:19.5px;color:#ffffff;font-family:'Liberation Mono',monospace;letter-spacing:-0.7px;transform:translateX(-100%);">52</div>
<div class="t" style="left:323.5px;top:663.51px;font-size:19.5px;color:#9a9a9a;font-family:'Liberation Mono',monospace;letter-spacing:-0.7px;transform:translateX(-100%);">53</div>
<div class="a" style="left:344px;top:115px;width:2px;height:152px;background:#a5a5a5;"></div>
<div class="a" style="left:344px;top:266px;width:7px;height:2px;background:#a5a5a5;"></div>
<div class="a" style="left:344px;top:168px;width:7px;height:2px;background:#a5a5a5;"></div>
<div class="a" style="left:344px;top:217px;width:7px;height:2px;background:#a5a5a5;"></div>
<div class="t" style="left:435.34000000000003px;top:146.54px;font-size:20.3px;color:#e6e6e6;font-family:'Liberation Mono',monospace;letter-spacing:-1.202px;-webkit-text-stroke-width:0.35px;"><span style="color:#8c8c8c">&lt;/</span><span style="color:#e6e6e6">ComboBox.ItemTemplate</span><span style="color:#8c8c8c">&gt;</span></div>
<div class="t" style="left:391.42px;top:195.46px;font-size:20.3px;color:#e6e6e6;font-family:'Liberation Mono',monospace;letter-spacing:-1.202px;-webkit-text-stroke-width:0.35px;"><span style="color:#8c8c8c">&lt;/</span><span style="color:#e6e6e6">ComboBox</span><span style="color:#8c8c8c">&gt;</span></div>
<div class="t" style="left:347.5px;top:244.38px;font-size:20.3px;color:#e6e6e6;font-family:'Liberation Mono',monospace;letter-spacing:-1.202px;-webkit-text-stroke-width:0.35px;"><span style="color:#8c8c8c">&lt;/</span><span style="color:#e6e6e6">StackPanel</span><span style="color:#8c8c8c">&gt;</span></div>
<div class="t" style="left:391.42px;top:366.68px;font-size:20.3px;color:#e6e6e6;font-family:'Liberation Mono',monospace;letter-spacing:-1.202px;-webkit-text-stroke-width:0.35px;"><span style="color:#8c8c8c">&lt;</span><span style="color:#e6e6e6">Label</span><span style="color:#c8c8c8"> </span><span style="color:#9cdcfe">FontSize</span><span style="color:#8c8c8c">=</span><span style="color:#569cd6">&quot;16&quot;</span><span style="color:#c8c8c8"> </span><span style="color:#9cdcfe">FontWeight</span><span style="color:#8c8c8c">=</span><span style="color:#569cd6">&quot;ExtraBold&quot;</span><span style="color:#8c8c8c">&gt;</span><span style="color:#c8c8c8">Païssos</span><span style="color:#8c8c8c">&lt;/</span><span style="color:#e6e6e6">Label</span><span style="color:#8c8c8c">&gt;</span></div>
<div class="t" style="left:391.42px;top:391.14px;font-size:20.3px;color:#e6e6e6;font-family:'Liberation Mono',monospace;letter-spacing:-1.202px;-webkit-text-stroke-width:0.35px;"><span style="color:#8c8c8c">&lt;</span><span style="color:#e6e6e6">CheckBox</span><span style="color:#c8c8c8"> </span><span style="color:#9cdcfe">Name</span><span style="color:#8c8c8c">=</span><span style="color:#569cd6">&quot;TotesP&quot;</span><span style="color:#c8c8c8"> </span><span style="color:#9cdcfe">IsThreeState</span><span style="color:#8c8c8c">=</span><span style="color:#569cd6">&quot;True&quot;</span><span style="color:#c8c8c8"> </span><span style="color:#9cdcfe">Checked</span><span style="color:#8c8c8c">=</span><span style="color:#569cd6">&quot;TotesP_Checked&quot;</span><span style="color:#c8c8c8"> </span><span style="color:#9cdcfe">Unchecked</span><span style="color:#8c8c8c">=</span><span style="color:#569cd6">&quot;TotesP_Unchecked&quot;</span><span style="color:#8c8c8c">&gt;</span><span style="color:#c8c8c8">Agregar Totes</span></div>
<div class="t" style="left:435.34000000000003px;top:513.44px;font-size:20.3px;color:#e6e6e6;font-family:'Liberation Mono',monospace;letter-spacing:-1.202px;-webkit-text-stroke-width:0.35px;"><span style="color:#8c8c8c">&lt;</span><span style="color:#e6e6e6">CheckBox</span><span style="color:#c8c8c8"> </span><span style="color:#9cdcfe">Name</span><span style="color:#8c8c8c">=</span><span style="color:#569cd6">&quot;Angles&quot;</span><span style="color:#c8c8c8"> </span><span style="color:#9cdcfe">Checked</span><span style="color:#8c8c8c">=</span><span style="color:#569cd6">&quot;IndividualChecked&quot;</span><span style="color:#c8c8c8"> </span><span style="color:#9cdcfe">Unchecked</span><span style="color:#8c8c8c">=</span><span style="color:#569cd6">&quot;IndividualUnChecked&quot;</span><span style="color:#8c8c8c">&gt;</span><span style="color:#c8c8c8">Anglès</span><span style="color:#8c8c8c">&lt;/</span><span style="color:#e6e6e6">CheckBox</span><span style="color:#8c8c8c">&gt;</span></div>
<div class="t" style="left:435.34000000000003px;top:537.90px;font-size:20.3px;color:#e6e6e6;font-family:'Liberation Mono',monospace;letter-spacing:-1.202px;-webkit-text-stroke-width:0.35px;"><span style="color:#8c8c8c">&lt;</span><span style="color:#e6e6e6">CheckBox</span><span style="color:#c8c8c8"> </span><span style="color:#9cdcfe">Name</span><span style="color:#8c8c8c">=</span><span style="color:#569cd6">&quot;Girona&quot;</span><span style="color:#c8c8c8"> </span><span style="color:#9cdcfe">Checked</span><span style="color:#8c8c8c">=</span><span style="color:#569cd6">&quot;IndividualChecked&quot;</span><span style="color:#c8c8c8"> </span><span style="color:#9cdcfe">Unchecked</span><span style="color:#8c8c8c">=</span><span style="color:#569cd6">&quot;IndividualUnChecked&quot;</span><span style="color:#8c8c8c">&gt;</span><span style="color:#c8c8c8">Girona</span><span style="color:#8c8c8c">&lt;/</span><span style="color:#e6e6e6">CheckBox</span><span style="color:#8c8c8c">&gt;</span></div>
<div class="t" style="left:435.34000000000003px;top:562.36px;font-size:20.3px;color:#e6e6e6;font-family:'Liberation Mono',monospace;letter-spacing:-1.202px;-webkit-text-stroke-width:0.35px;"><span style="color:#8c8c8c">&lt;</span><span style="color:#e6e6e6">CheckBox</span><span style="color:#c8c8c8"> </span><span style="color:#9cdcfe">Name</span><span style="color:#8c8c8c">=</span><span style="color:#569cd6">&quot;Berga&quot;</span><span style="color:#c8c8c8"> </span><span style="color:#9cdcfe">Checked</span><span style="color:#8c8c8c">=</span><span style="color:#569cd6">&quot;IndividualChecked&quot;</span><span style="color:#c8c8c8"> </span><span style="color:#9cdcfe">Unchecked</span><span style="color:#8c8c8c">=</span><span style="color:#569cd6">&quot;IndividualUnChecked&quot;</span><span style="color:#8c8c8c">&gt;</span><span style="color:#c8c8c8">Berga</span><span style="color:#8c8c8c">&lt;/</span><span style="color:#e6e6e6">CheckBox</span><span style="color:#8c8c8c">&gt;</span></div>
<div class="t" style="left:435.34000000000003px;top:586.82px;font-size:20.3px;color:#e6e6e6;font-family:'Liberation Mono',monospace;letter-spacing:-1.202px;-webkit-text-stroke-width:0.35px;"><span style="color:#8c8c8c">&lt;</span><span style="color:#e6e6e6">CheckBox</span><span style="color:#c8c8c8"> </span><span style="color:#9cdcfe">Name</span><span style="color:#8c8c8c">=</span><span style="color:#569cd6">&quot;Olot&quot;</span><span style="color:#c8c8c8"> </span><span style="color:#9cdcfe">Checked</span><span style="color:#8c8c8c">=</span><span style="color:#569cd6">&quot;IndividualChecked&quot;</span><span style="color:#c8c8c8"> </span><span style="color:#9cdcfe">Unchecked</span><span style="color:#8c8c8c">=</span><span style="color:#569cd6">&quot;IndividualUnChecked&quot;</span><span style="color:#8c8c8c">&gt;</span><span style="color:#c8c8c8">Olot</span><span style="color:#8c8c8c">&lt;/</span><span style="color:#e6e6e6">CheckBox</span><span style="color:#8c8c8c">&gt;</span></div>
<div class="t" style="left:435.34000000000003px;top:611.28px;font-size:20.3px;color:#e6e6e6;font-family:'Liberation Mono',monospace;letter-spacing:-1.202px;-webkit-text-stroke-width:0.35px;"><span style="color:#8c8c8c">&lt;</span><span style="color:#e6e6e6">CheckBox</span><span style="color:#c8c8c8"> </span><span style="color:#9cdcfe">Name</span><span style="color:#8c8c8c">=</span><span style="color:#569cd6">&quot;Ripoll&quot;</span><span style="color:#c8c8c8"> </span><span style="color:#9cdcfe">Checked</span><span style="color:#8c8c8c">=</span><span style="color:#569cd6">&quot;IndividualChecked&quot;</span><span style="color:#c8c8c8"> </span><span style="color:#9cdcfe">Unchecked</span><span style="color:#8c8c8c">=</span><span style="color:#569cd6">&quot;IndividualUnChecked&quot;</span><span style="color:#8c8c8c">&gt;</span><span style="color:#c8c8c8">Ripoll</span><span style="color:#8c8c8c">&lt;/</span><span style="color:#e6e6e6">CheckBox</span><span style="color:#8c8c8c">&gt;</span></div>
<div class="t" style="left:391.42px;top:660.20px;font-size:20.3px;color:#e6e6e6;font-family:'Liberation Mono',monospace;letter-spacing:-1.202px;-webkit-text-stroke-width:0.35px;"><span style="color:#8c8c8c">&lt;/</span><span style="color:#e6e6e6">StackPanel</span><span style="color:#8c8c8c">&gt;</span></div>
<div class="t" style="left:347.5px;top:317.76px;font-size:20.3px;color:#e6e6e6;font-family:'Liberation Mono',monospace;letter-spacing:-1.202px;-webkit-text-stroke-width:0.35px;"><span style="color:#8c8c8c">&lt;</span><span style="color:#e6e6e6">StackPanel</span><span style="color:#c8c8c8"> </span><span style="color:#9cdcfe">Grid.Column</span><span style="color:#8c8c8c">=</span><span style="color:#569cd6">&quot;1&quot;</span><span style="color:#c8c8c8"> </span><span style="color:#9cdcfe">Margin</span><span style="color:#8c8c8c">=</span><span style="color:#569cd6">&quot;</span></div>
<div class="t" style="left:801.48px;top:317.76px;font-size:20.3px;color:#e6e6e6;font-family:'Liberation Mono',monospace;letter-spacing:-1.202px;-webkit-text-stroke-width:0.35px;"><span style="color:#569cd6">100&quot;</span><span style="color:#8c8c8c">&gt;</span></div>
<div class="t" style="left:391.42px;top:464.52px;font-size:20.3px;color:#e6e6e6;font-family:'Liberation Mono',monospace;letter-spacing:-1.202px;-webkit-text-stroke-width:0.35px;"><span style="color:#8c8c8c">&lt;</span><span style="color:#e6e6e6">StackPanel</span><span style="color:#c8c8c8"> </span><span style="color:#9cdcfe">Margin</span><span style="color:#8c8c8c">=</span><span style="color:#569cd6">&quot;</span></div>
<div class="t" style="left:669.72px;top:464.52px;font-size:20.3px;color:#e6e6e6;font-family:'Liberation Mono',monospace;letter-spacing:-1.202px;-webkit-text-stroke-width:0.35px;"><span style="color:#569cd6">15&quot;</span><span style="color:#8c8c8c">&gt;</span></div>
<div class="a" style="left:744.2px;top:317.0px;width:56px;height:19.6px;background:#2a2b33;border-radius:3px;"></div>
<div class="t" style="left:746.78px;top:319.82px;font-size:15px;color:#b0a070;font-family:'Liberation Mono',monospace;letter-spacing:-0.64px;">[all:]</div>
<div class="a" style="left:612.4px;top:463.8px;width:56px;height:19.6px;background:#2a2b33;border-radius:3px;"></div>
<div class="t" style="left:615.02px;top:466.58px;font-size:15px;color:#b0a070;font-family:'Liberation Mono',monospace;letter-spacing:-0.64px;">[all:]</div>
<svg style="left:873.0px;top:383.5px;clip-path:inset(-2px 1.1px -2px 0);" width="80" height="5" viewBox="0 0 80 5"><path d="M0 2.5 q2.5 -2.8 5 0 t5 0 t5 0 t5 0 t5 0 t5 0 t5 0 t5 0 t5 0 t5 0 t5 0 t5 0 t5 0 t5 0 t5 0 t5 0" fill="none" stroke="#10dc10" stroke-width="1.7"/></svg>
<svg style="left:1466.0px;top:408.0px;clip-path:inset(-2px 1.1px -2px 0);" width="80" height="5" viewBox="0 0 80 5"><path d="M0 2.5 q2.5 -2.8 5 0 t5 0 t5 0 t5 0 t5 0 t5 0 t5 0 t5 0 t5 0 t5 0 t5 0 t5 0 t5 0 t5 0 t5 0 t5 0" fill="none" stroke="#10dc10" stroke-width="1.7"/></svg>
<svg style="left:1356.2px;top:530.3px;clip-path:inset(-2px 2.1px -2px 0);" width="69" height="5" viewBox="0 0 69 5"><path d="M0 2.5 q2.5 -2.8 5 0 t5 0 t5 0 t5 0 t5 0 t5 0 t5 0 t5 0 t5 0 t5 0 t5 0 t5 0 t5 0 t5 0" fill="none" stroke="#10dc10" stroke-width="1.7"/></svg>
<svg style="left:1356.2px;top:554.8px;clip-path:inset(-2px 2.1px -2px 0);" width="69" height="5" viewBox="0 0 69 5"><path d="M0 2.5 q2.5 -2.8 5 0 t5 0 t5 0 t5 0 t5 0 t5 0 t5 0 t5 0 t5 0 t5 0 t5 0 t5 0 t5 0 t5 0" fill="none" stroke="#10dc10" stroke-width="1.7"/></svg>
<svg style="left:609.5px;top:554.8px;clip-path:inset(-2px 2.1px -2px 0);" width="69" height="5" viewBox="0 0 69 5"><path d="M0 2.5 q2.5 -2.8 5 0 t5 0 t5 0 t5 0 t5 0 t5 0 t5 0 t5 0 t5 0 t5 0 t5 0 t5 0 t5 0 t5 0" fill="none" stroke="#10dc10" stroke-width="1.7"/></svg>
<svg style="left:1345.2px;top:579.2px;clip-path:inset(-2px 3.1px -2px 0);" width="58" height="5" viewBox="0 0 58 5"><path d="M0 2.5 q2.5 -2.8 5 0 t5 0 t5 0 t5 0 t5 0 t5 0 t5 0 t5 0 t5 0 t5 0 t5 0 t5 0" fill="none" stroke="#10dc10" stroke-width="1.7"/></svg>
<svg style="left:609.5px;top:579.2px;clip-path:inset(-2px 3.1px -2px 0);" width="58" height="5" viewBox="0 0 58 5"><path d="M0 2.5 q2.5 -2.8 5 0 t5 0 t5 0 t5 0 t5 0 t5 0 t5 0 t5 0 t5 0 t5 0 t5 0 t5 0" fill="none" stroke="#10dc10" stroke-width="1.7"/></svg>
<svg style="left:1334.2px;top:603.7px;clip-path:inset(-2px 4.1px -2px 0);" width="47" height="5" viewBox="0 0 47 5"><path d="M0 2.5 q2.5 -2.8 5 0 t5 0 t5 0 t5 0 t5 0 t5 0 t5 0 t5 0 t5 0 t5 0" fill="none" stroke="#10dc10" stroke-width="1.7"/></svg>
<svg style="left:609.5px;top:603.7px;clip-path:inset(-2px 4.1px -2px 0);" width="47" height="5" viewBox="0 0 47 5"><path d="M0 2.5 q2.5 -2.8 5 0 t5 0 t5 0 t5 0 t5 0 t5 0 t5 0 t5 0 t5 0 t5 0" fill="none" stroke="#10dc10" stroke-width="1.7"/></svg>
<svg style="left:1356.2px;top:628.1px;clip-path:inset(-2px 2.1px -2px 0);" width="69" height="5" viewBox="0 0 69 5"><path d="M0 2.5 q2.5 -2.8 5 0 t5 0 t5 0 t5 0 t5 0 t5 0 t5 0 t5 0 t5 0 t5 0 t5 0 t5 0 t5 0 t5 0" fill="none" stroke="#10dc10" stroke-width="1.7"/></svg>
<svg style="left:609.5px;top:628.1px;clip-path:inset(-2px 2.1px -2px 0);" width="69" height="5" viewBox="0 0 69 5"><path d="M0 2.5 q2.5 -2.8 5 0 t5 0 t5 0 t5 0 t5 0 t5 0 t5 0 t5 0 t5 0 t5 0 t5 0 t5 0 t5 0 t5 0" fill="none" stroke="#10dc10" stroke-width="1.7"/></svg>
<svg style="left:351px;top:117px;" width="1" height="135" viewBox="0 0 1 135"><line x1="0.5" y1="0" x2="0.5" y2="135" stroke="#8a8a8a" stroke-width="1.2" stroke-dasharray="4 4"/></svg>
<svg style="left:395px;top:117px;" width="1" height="80" viewBox="0 0 1 80"><line x1="0.5" y1="0" x2="0.5" y2="80" stroke="#8a8a8a" stroke-width="1.2" stroke-dasharray="4 4"/></svg>
<svg style="left:439px;top:117px;" width="1" height="31" viewBox="0 0 1 31"><line x1="0.5" y1="0" x2="0.5" y2="31" stroke="#8a8a8a" stroke-width="1.2" stroke-dasharray="4 4"/></svg>
<svg style="left:351px;top:341px;" width="1" height="341" viewBox="0 0 1 341"><line x1="0.5" y1="0" x2="0.5" y2="341" stroke="#8a8a8a" stroke-width="1.2" stroke-dasharray="4 4"/></svg>
<svg style="left:395px;top:490px;" width="1" height="170" viewBox="0 0 1 170"><line x1="0.5" y1="0" x2="0.5" y2="170" stroke="#8a8a8a" stroke-width="1.2" stroke-dasharray="4 4"/></svg>
<div class="a" style="left:344px;top:115px;width:1.6px;height:208px;background:#a0a0a0;"></div>
<div class="a" style="left:344px;top:336px;width:1.6px;height:132px;background:#a0a0a0;"></div>
<div class="a" style="left:344px;top:481px;width:1.6px;height:202px;background:#a0a0a0;"></div>
<div class="a" style="left:344px;top:168px;width:7px;height:1.6px;background:#a0a0a0;"></div>
<div class="a" style="left:344px;top:217px;width:7px;height:1.6px;background:#a0a0a0;"></div>
<div class="a" style="left:344px;top:266px;width:7px;height:1.6px;background:#a0a0a0;"></div>
<div class="a" style="left:344px;top:681px;width:7px;height:1.6px;background:#a0a0a0;"></div>
<div class="a" style="left:338px;top:322.0px;width:13px;height:13px;background:#1e1e1e;border:1px solid #a0a0a0;"></div>
<div class="a" style="left:340.5px;top:327.8px;width:8px;height:1.3px;background:#e8e8e8;"></div>
<div class="a" style="left:338px;top:468.8px;width:13px;height:13px;background:#1e1e1e;border:1px solid #a0a0a0;"></div>
<div class="a" style="left:340.5px;top:474.6px;width:8px;height:1.3px;background:#e8e8e8;"></div>
<div class="a" style="left:352px;top:633px;width:1254px;height:25px;border:2.6px solid #464646;"></div>
<div class="a" style="left:435.4px;top:633.5px;width:1.7px;height:23px;background:#dcdcdc;"></div>
<svg style="left:0px;top:0px;" width="1" height="1" viewBox="0 0 1 1"><line x1="974.7" y1="453.1" x2="1031.3" y2="524.3" stroke="#ffffff" stroke-width="2.3"/><path d="M1042.5 538.4 L1027.1 527.7 L1035.5 520.9 Z" fill="#ffffff"/></svg>
<svg style="left:0px;top:0px;" width="1" height="1" viewBox="0 0 1 1"><line x1="964.9" y1="483.1" x2="998.8" y2="544.5" stroke="#ffffff" stroke-width="2.3"/><path d="M1007.5 560.3 L994.1 547.1 L1003.5 541.9 Z" fill="#ffffff"/></svg>
<svg style="left:0px;top:0px;" width="1" height="1" viewBox="0 0 1 1"><line x1="941.9" y1="549.4" x2="966.1" y2="568.8" stroke="#ffffff" stroke-width="2.3"/><path d="M980.2 580.0 L962.8 573.0 L969.5 564.5 Z" fill="#ffffff"/></svg>
<svg style="left:0px;top:0px;" width="1" height="1" viewBox="0 0 1 1"><line x1="955.0" y1="593.1" x2="981.0" y2="612.1" stroke="#ffffff" stroke-width="2.3"/><path d="M995.5 622.7 L977.8 616.4 L984.2 607.7 Z" fill="#ffffff"/></svg>
<svg style="left:0px;top:0px;" width="1" height="1" viewBox="0 0 1 1"><line x1="1376.8" y1="449.8" x2="1296.8" y2="491.8" stroke="#ffffff" stroke-width="2.3"/><path d="M1280.9 500.2 L1294.3 487.0 L1299.3 496.6 Z" fill="#ffffff"/></svg>
<svg style="left:0px;top:0px;" width="1" height="1" viewBox="0 0 1 1"><line x1="1406.7" y1="498.0" x2="1288.2" y2="559.7" stroke="#ffffff" stroke-width="2.3"/><path d="M1272.2 568.0 L1285.7 554.9 L1290.7 564.5 Z" fill="#ffffff"/></svg>
<svg style="left:0px;top:0px;" width="1" height="1" viewBox="0 0 1 1"><line x1="1417.7" y1="542.8" x2="1273.7" y2="597.7" stroke="#ffffff" stroke-width="2.3"/><path d="M1256.9 604.1 L1271.8 592.6 L1275.6 602.7 Z" fill="#ffffff"/></svg>
<svg style="left:0px;top:0px;" width="1" height="1" viewBox="0 0 1 1"><line x1="1439.6" y1="551.6" x2="1327.0" y2="600.3" stroke="#ffffff" stroke-width="2.3"/><path d="M1310.5 607.4 L1324.9 595.3 L1329.2 605.2 Z" fill="#ffffff"/></svg>
<div class="a" style="left:1606px;top:115px;width:80px;height:18px;background:#2b2b2b;"></div>
<div class="a" style="left:1606px;top:133px;width:80px;height:549px;background:#3e3e42;"></div>
<div class="a" style="left:1606px;top:94px;width:80px;height:21px;background:#333333;"></div>
<div class="a" style="left:1612px;top:330px;width:72px;height:146px;background:#000000;border:1px solid #5a5a5a;border-radius:3px;"></div>
<div class="a" style="left:1606px;top:195px;width:6px;height:311px;background:#57a64a;"></div>
<div class="a" style="left:1606px;top:432px;width:6px;height:36px;border:1px solid #c8a62a;"></div>
<div class="a" style="left:1606px;top:467px;width:78px;height:2px;background:#f0f0f0;"></div>
<div class="a" style="left:1617px;top:150.0px;width:8px;height:1.4px;background:#a8a8a8;background:repeating-linear-gradient(90deg,#b0b0b0 0 2px,#777 2px 3px);"></div>
<div class="a" style="left:1626px;top:150.0px;width:18px;height:1.4px;background:repeating-linear-gradient(90deg,#5088b8 0 3px,#3a4a5a 3px 4px);"></div>
<div class="a" style="left:1621px;top:156.3px;width:10px;height:1.4px;background:#a8a8a8;background:repeating-linear-gradient(90deg,#b0b0b0 0 2px,#777 2px 3px);"></div>
<div class="a" style="left:1632px;top:156.3px;width:25px;height:1.4px;background:repeating-linear-gradient(90deg,#5088b8 0 3px,#3a4a5a 3px 4px);"></div>
<div class="a" style="left:1621px;top:163.1px;width:9px;height:1.4px;background:#a8a8a8;background:repeating-linear-gradient(90deg,#b0b0b0 0 2px,#777 2px 3px);"></div>
<div class="a" style="left:1631px;top:163.1px;width:20px;height:1.4px;background:repeating-linear-gradient(90deg,#5088b8 0 3px,#3a4a5a 3px 4px);"></div>
<div class="a" style="left:1621px;top:169.3px;width:10px;height:1.4px;background:#a8a8a8;background:repeating-linear-gradient(90deg,#b0b0b0 0 2px,#777 2px 3px);"></div>
<div class="a" style="left:1632px;top:169.3px;width:23px;height:1.4px;background:repeating-linear-gradient(90deg,#5088b8 0 3px,#3a4a5a 3px 4px);"></div>
<div class="a" style="left:1621px;top:175.3px;width:11px;height:1.4px;background:#a8a8a8;background:repeating-linear-gradient(90deg,#b0b0b0 0 2px,#777 2px 3px);"></div>
<div class="a" style="left:1633px;top:175.3px;width:27px;height:1.4px;background:repeating-linear-gradient(90deg,#5088b8 0 3px,#3a4a5a 3px 4px);"></div>
<div class="a" style="left:1621px;top:181.3px;width:8px;height:1.4px;background:#a8a8a8;background:repeating-linear-gradient(90deg,#b0b0b0 0 2px,#777 2px 3px);"></div>
<div class="a" style="left:1630px;top:181.3px;width:18px;height:1.4px;background:repeating-linear-gradient(90deg,#5088b8 0 3px,#3a4a5a 3px 4px);"></div>
<div class="a" style="left:1621px;top:188.3px;width:3px;height:1.4px;background:#a8a8a8;background:repeating-linear-gradient(90deg,#b0b0b0 0 2px,#777 2px 3px);"></div>
<div class="a" style="left:1625px;top:188.3px;width:5px;height:1.4px;background:repeating-linear-gradient(90deg,#5088b8 0 3px,#3a4a5a 3px 4px);"></div>
<div class="a" style="left:1621px;top:194.3px;width:7px;height:1.4px;background:#a8a8a8;background:repeating-linear-gradient(90deg,#b0b0b0 0 2px,#777 2px 3px);"></div>
<div class="a" style="left:1629px;top:194.3px;width:17px;height:1.4px;background:repeating-linear-gradient(90deg,#5088b8 0 3px,#3a4a5a 3px 4px);"></div>
<div class="a" style="left:1619px;top:200.3px;width:3px;height:1.4px;background:#a8a8a8;background:repeating-linear-gradient(90deg,#b0b0b0 0 2px,#777 2px 3px);"></div>
<div class="a" style="left:1622px;top:213.3px;width:3px;height:1.4px;background:#a8a8a8;background:repeating-linear-gradient(90deg,#b0b0b0 0 2px,#777 2px 3px);"></div>
<div class="a" style="left:1626px;top:213.3px;width:8px;height:1.4px;background:repeating-linear-gradient(90deg,#5088b8 0 3px,#3a4a5a 3px 4px);"></div>
<div class="a" style="left:1624px;top:219.3px;width:8px;height:1.4px;background:#a8a8a8;background:repeating-linear-gradient(90deg,#b0b0b0 0 2px,#777 2px 3px);"></div>
<div class="a" style="left:1633px;top:219.3px;width:18px;height:1.4px;background:repeating-linear-gradient(90deg,#5088b8 0 3px,#3a4a5a 3px 4px);"></div>
<div class="a" style="left:1624px;top:225.3px;width:7px;height:1.4px;background:#a8a8a8;background:repeating-linear-gradient(90deg,#b0b0b0 0 2px,#777 2px 3px);"></div>
<div class="a" style="left:1632px;top:225.3px;width:18px;height:1.4px;background:repeating-linear-gradient(90deg,#5088b8 0 3px,#3a4a5a 3px 4px);"></div>
<div class="a" style="left:1622px;top:231.3px;width:3px;height:1.4px;background:#a8a8a8;background:repeating-linear-gradient(90deg,#b0b0b0 0 2px,#777 2px 3px);"></div>
<div class="a" style="left:1626px;top:231.3px;width:9px;height:1.4px;background:repeating-linear-gradient(90deg,#5088b8 0 3px,#3a4a5a 3px 4px);"></div>
<div class="a" style="left:1622px;top:244.3px;width:3px;height:1.4px;background:#a8a8a8;background:repeating-linear-gradient(90deg,#b0b0b0 0 2px,#777 2px 3px);"></div>
<div class="a" style="left:1626px;top:244.3px;width:2px;height:1.4px;background:repeating-linear-gradient(90deg,#5088b8 0 3px,#3a4a5a 3px 4px);"></div>
<div class="a" style="left:1624px;top:256.3px;width:4px;height:1.4px;background:#a8a8a8;background:repeating-linear-gradient(90deg,#b0b0b0 0 2px,#777 2px 3px);"></div>
<div class="a" style="left:1629px;top:256.3px;width:10px;height:1.4px;background:repeating-linear-gradient(90deg,#5088b8 0 3px,#3a4a5a 3px 4px);"></div>
<div class="a" style="left:1626px;top:269.3px;width:3px;height:1.4px;background:#a8a8a8;background:repeating-linear-gradient(90deg,#b0b0b0 0 2px,#777 2px 3px);"></div>
<div class="a" style="left:1630px;top:269.3px;width:8px;height:1.4px;background:repeating-linear-gradient(90deg,#5088b8 0 3px,#3a4a5a 3px 4px);"></div>
<div class="a" style="left:1628px;top:281.3px;width:3px;height:1.4px;background:#a8a8a8;background:repeating-linear-gradient(90deg,#b0b0b0 0 2px,#777 2px 3px);"></div>
<div class="a" style="left:1632px;top:281.3px;width:5px;height:1.4px;background:repeating-linear-gradient(90deg,#5088b8 0 3px,#3a4a5a 3px 4px);"></div>
<div class="a" style="left:1631px;top:294.3px;width:6px;height:1.4px;background:#a8a8a8;background:repeating-linear-gradient(90deg,#b0b0b0 0 2px,#777 2px 3px);"></div>
<div class="a" style="left:1638px;top:294.3px;width:13px;height:1.4px;background:repeating-linear-gradient(90deg,#5088b8 0 3px,#3a4a5a 3px 4px);"></div>
<div class="a" style="left:1633px;top:306.3px;width:11px;height:1.4px;background:#a8a8a8;background:repeating-linear-gradient(90deg,#b0b0b0 0 2px,#777 2px 3px);"></div>
<div class="a" style="left:1645px;top:306.3px;width:25px;height:1.4px;background:repeating-linear-gradient(90deg,#5088b8 0 3px,#3a4a5a 3px 4px);"></div>
<div class="a" style="left:1631px;top:319.3px;width:3px;height:1.4px;background:#a8a8a8;background:repeating-linear-gradient(90deg,#b0b0b0 0 2px,#777 2px 3px);"></div>
<div class="a" style="left:1635px;top:319.3px;width:2px;height:1.4px;background:repeating-linear-gradient(90deg,#5088b8 0 3px,#3a4a5a 3px 4px);"></div>
<div class="a" style="left:1628px;top:330.8px;width:3px;height:1.4px;background:#a8a8a8;background:repeating-linear-gradient(90deg,#b0b0b0 0 2px,#777 2px 3px);"></div>
<div class="a" style="left:1632px;top:330.8px;width:4px;height:1.4px;background:repeating-linear-gradient(90deg,#5088b8 0 3px,#3a4a5a 3px 4px);"></div>
<div class="a" style="left:1626px;top:343.9px;width:3px;height:1.4px;background:#a8a8a8;background:repeating-linear-gradient(90deg,#b0b0b0 0 2px,#777 2px 3px);"></div>
<div class="a" style="left:1630px;top:343.9px;width:8px;height:1.4px;background:repeating-linear-gradient(90deg,#5088b8 0 3px,#3a4a5a 3px 4px);"></div>
<div class="a" style="left:1624px;top:356.1px;width:3px;height:1.4px;background:#a8a8a8;background:repeating-linear-gradient(90deg,#b0b0b0 0 2px,#777 2px 3px);"></div>
<div class="a" style="left:1628px;top:356.1px;width:2px;height:1.4px;background:repeating-linear-gradient(90deg,#5088b8 0 3px,#3a4a5a 3px 4px);"></div>
<div class="a" style="left:1622px;top:368.8px;width:3px;height:1.4px;background:#a8a8a8;background:repeating-linear-gradient(90deg,#b0b0b0 0 2px,#777 2px 3px);"></div>
<div class="a" style="left:1626px;top:368.8px;width:2px;height:1.4px;background:repeating-linear-gradient(90deg,#5088b8 0 3px,#3a4a5a 3px 4px);"></div>
<div class="a" style="left:1622px;top:387.9px;width:6px;height:1.4px;background:#a8a8a8;background:repeating-linear-gradient(90deg,#b0b0b0 0 2px,#777 2px 3px);"></div>
<div class="a" style="left:1629px;top:387.9px;width:16px;height:1.4px;background:repeating-linear-gradient(90deg,#5088b8 0 3px,#3a4a5a 3px 4px);"></div>
<div class="a" style="left:1624px;top:399.9px;width:10px;height:1.4px;background:#a8a8a8;background:repeating-linear-gradient(90deg,#b0b0b0 0 2px,#777 2px 3px);"></div>
<div class="a" style="left:1635px;top:399.9px;width:25px;height:1.4px;background:repeating-linear-gradient(90deg,#5088b8 0 3px,#3a4a5a 3px 4px);"></div>
<div class="a" style="left:1624px;top:405.8px;width:15px;height:1.4px;background:#a8a8a8;background:repeating-linear-gradient(90deg,#b0b0b0 0 2px,#777 2px 3px);"></div>
<div class="a" style="left:1640px;top:405.8px;width:35px;height:1.4px;background:repeating-linear-gradient(90deg,#5088b8 0 3px,#3a4a5a 3px 4px);"></div>
<div class="a" style="left:1624px;top:424.8px;width:3px;height:1.4px;background:#a8a8a8;background:repeating-linear-gradient(90deg,#b0b0b0 0 2px,#777 2px 3px);"></div>
<div class="a" style="left:1628px;top:424.8px;width:9px;height:1.4px;background:repeating-linear-gradient(90deg,#5088b8 0 3px,#3a4a5a 3px 4px);"></div>
<div class="a" style="left:1626px;top:437.3px;width:14px;height:1.4px;background:#a8a8a8;background:repeating-linear-gradient(90deg,#b0b0b0 0 2px,#777 2px 3px);"></div>
<div class="a" style="left:1641px;top:437.3px;width:34px;height:1.4px;background:repeating-linear-gradient(90deg,#5088b8 0 3px,#3a4a5a 3px 4px);"></div>
<div class="a" style="left:1626px;top:443.3px;width:14px;height:1.4px;background:#a8a8a8;background:repeating-linear-gradient(90deg,#b0b0b0 0 2px,#777 2px 3px);"></div>
<div class="a" style="left:1641px;top:443.3px;width:34px;height:1.4px;background:repeating-linear-gradient(90deg,#5088b8 0 3px,#3a4a5a 3px 4px);"></div>
<div class="a" style="left:1626px;top:449.3px;width:14px;height:1.4px;background:#a8a8a8;background:repeating-linear-gradient(90deg,#b0b0b0 0 2px,#777 2px 3px);"></div>
<div class="a" style="left:1641px;top:449.3px;width:34px;height:1.4px;background:repeating-linear-gradient(90deg,#5088b8 0 3px,#3a4a5a 3px 4px);"></div>
<div class="a" style="left:1626px;top:455.3px;width:14px;height:1.4px;background:#a8a8a8;background:repeating-linear-gradient(90deg,#b0b0b0 0 2px,#777 2px 3px);"></div>
<div class="a" style="left:1641px;top:455.3px;width:34px;height:1.4px;background:repeating-linear-gradient(90deg,#5088b8 0 3px,#3a4a5a 3px 4px);"></div>
<div class="a" style="left:1626px;top:461.3px;width:14px;height:1.4px;background:#a8a8a8;background:repeating-linear-gradient(90deg,#b0b0b0 0 2px,#777 2px 3px);"></div>
<div class="a" style="left:1641px;top:461.3px;width:34px;height:1.4px;background:repeating-linear-gradient(90deg,#5088b8 0 3px,#3a4a5a 3px 4px);"></div>
<div class="a" style="left:1624px;top:474.3px;width:3px;height:1.4px;background:#a8a8a8;background:repeating-linear-gradient(90deg,#b0b0b0 0 2px,#777 2px 3px);"></div>
<div class="a" style="left:1628px;top:474.3px;width:2px;height:1.4px;background:repeating-linear-gradient(90deg,#5088b8 0 3px,#3a4a5a 3px 4px);"></div>
<div class="a" style="left:1622px;top:487.3px;width:3px;height:1.4px;background:#a8a8a8;background:repeating-linear-gradient(90deg,#b0b0b0 0 2px,#777 2px 3px);"></div>
<div class="a" style="left:1626px;top:487.3px;width:2px;height:1.4px;background:repeating-linear-gradient(90deg,#5088b8 0 3px,#3a4a5a 3px 4px);"></div>
<div class="a" style="left:1619px;top:505.3px;width:3px;height:1.4px;background:#a8a8a8;background:repeating-linear-gradient(90deg,#b0b0b0 0 2px,#777 2px 3px);"></div>
<div class="a" style="left:1617px;top:512.3px;width:3px;height:1.4px;background:#a8a8a8;background:repeating-linear-gradient(90deg,#b0b0b0 0 2px,#777 2px 3px);"></div>
<div class="a" style="left:1675px;top:181px;width:10px;height:2.5px;background:#d08a10;"></div>
<div class="a" style="left:1675px;top:307px;width:10px;height:2.5px;background:#d08a10;"></div>
<div class="a" style="left:1675px;top:256px;width:10px;height:2.2px;background:#1fa01f;"></div>
<div class="a" style="left:1675px;top:399px;width:10px;height:2.2px;background:#1fa01f;"></div>
<div class="a" style="left:1675px;top:405px;width:10px;height:2.2px;background:#1fa01f;"></div>
<div class="a" style="left:1675px;top:432px;width:10px;height:2.2px;background:#1fa01f;"></div>
<div class="a" style="left:1675px;top:442px;width:10px;height:2.2px;background:#1fa01f;"></div>
<div class="a" style="left:1675px;top:450px;width:10px;height:2.2px;background:#1fa01f;"></div>
<div class="a" style="left:1675px;top:456px;width:10px;height:2.2px;background:#1fa01f;"></div>
<div class="a" style="left:1675px;top:459px;width:10px;height:2.2px;background:#1fa01f;"></div>
<div class="a" style="left:1002px;top:736px;width:277px;height:254px;border-left:1.5px solid #a8a8a8;border-top:1.5px solid #a8a8a8;border-right:1.5px solid #a8a8a8;"></div>
<div class="t" style="left:1009px;top:746.21px;font-size:17px;color:#000000;font-family:'Liberation Sans',sans-serif;font-weight:bold;-webkit-text-stroke:0.5px #000;letter-spacing:-0.25px;">Païssos</div>
<div class="a" style="left:1004px;top:772px;width:15px;height:14px;background:#ffffff;border:1px solid #707070;"></div>
<div class="t" style="left:1025px;top:772.70px;font-size:13px;color:#000000;font-family:'Liberation Sans',sans-serif;">Agregar Totes</div>
<div class="a" style="left:1228px;top:771px;width:33px;height:22px;background:#e6eaf6;border:1px solid #b8c4e0;"></div>
<svg style="left:1234px;top:774px;" width="14" height="17" viewBox="0 0 14 17"><path d="M7 1.5 C3.5 1.5 2 4 2 6.2 C2 8.5 3.8 9.8 4.6 11.5 H9.4 C10.2 9.8 12 8.5 12 6.2 C12 4 10.5 1.5 7 1.5 Z" fill="#f5c400"/><path d="M5.5 5.5 L7 8 L8.5 5.5" fill="none" stroke="#fff3a0" stroke-width="0.8"/><rect x="5" y="12.5" width="4" height="1" fill="#555"/><rect x="5.5" y="14.2" width="3" height="1" fill="#555"/></svg>
<svg style="left:1252px;top:779px;" width="5" height="8" viewBox="0 0 5 8"><path d="M0 0 L5 4 L0 8 Z" fill="#111"/></svg>
<div class="a" style="left:1018px;top:803px;width:245px;height:85px;border:1.2px solid #6b98ea;"></div>
<div class="a" style="left:1014.2px;top:798.7px;width:6px;height:6px;background:#ffffff;border:1.2px solid #6b98ea;"></div>
<div class="a" style="left:1014.2px;top:886.4000000000001px;width:6px;height:6px;background:#ffffff;border:1.2px solid #6b98ea;"></div>
<div class="a" style="left:1136.7px;top:798.7px;width:6px;height:6px;background:#ffffff;border:1.2px solid #6b98ea;"></div>
<div class="a" style="left:1136.7px;top:886.4000000000001px;width:6px;height:6px;background:#ffffff;border:1.2px solid #6b98ea;"></div>
<div class="a" style="left:1260.7px;top:798.7px;width:6px;height:6px;background:#ffffff;border:1.2px solid #6b98ea;"></div>
<div class="a" style="left:1260.7px;top:886.4000000000001px;width:6px;height:6px;background:#ffffff;border:1.2px solid #6b98ea;"></div>
<div class="a" style="left:1014.2px;top:842.2px;width:6px;height:6px;background:#ffffff;border:1.2px solid #6b98ea;"></div>
<div class="a" style="left:1260.7px;top:842.2px;width:6px;height:6px;background:#ffffff;border:1.2px solid #6b98ea;"></div>
<div class="a" style="left:1136.5px;top:841.7px;width:6.5px;height:6.5px;background:#ffffff;border:1.2px solid #6b98ea;border-radius:50%;"></div>
<div class="a" style="left:1021.3px;top:805.3px;width:14.5px;height:14px;background:#ffffff;border:1px solid #707070;"></div>
<div class="t" style="left:1042px;top:805.80px;font-size:13px;color:#000000;font-family:'Liberation Sans',sans-serif;">Anglès</div>
<div class="a" style="left:1021.3px;top:821.9px;width:14.5px;height:14px;background:#ffffff;border:1px solid #707070;"></div>
<div class="t" style="left:1042px;top:822.40px;font-size:13px;color:#000000;font-family:'Liberation Sans',sans-serif;">Girona</div>
<div class="a" style="left:1021.3px;top:838.6px;width:14.5px;height:14px;background:#ffffff;border:1px solid #707070;"></div>
<div class="t" style="left:1042px;top:839.10px;font-size:13px;color:#000000;font-family:'Liberation Sans',sans-serif;">Berga</div>
<div class="a" style="left:1021.3px;top:855.2px;width:14.5px;height:14px;background:#ffffff;border:1px solid #707070;"></div>
<div class="t" style="left:1042px;top:855.80px;font-size:13px;color:#000000;font-family:'Liberation Sans',sans-serif;">Olot</div>
<div class="a" style="left:1021.3px;top:871.9px;width:14.5px;height:14px;background:#ffffff;border:1px solid #707070;"></div>
<div class="t" style="left:1042px;top:872.40px;font-size:13px;color:#000000;font-family:'Liberation Sans',sans-serif;">Ripoll</div>
<svg style="left:51px;top:138.4px;" width="16" height="16" viewBox="0 0 16 16"><path d="M5 1 L11.5 7.5 L8.5 8 L10 11.5 L8.5 12 L7 8.5 L5 10.5 Z" fill="#c5c5c5"/></svg>
<svg style="left:51px;top:159.4px;" width="16" height="16" viewBox="0 0 16 16"><path d="M3.5 2.5 V13.5 M12.5 2.5 V13.5 M2.5 3.5 H13.5 M2.5 12.5 H13.5" fill="none" stroke="#c5c5c5" stroke-width="1"/><path d="M1 1 H4 V4 H1 Z M12 1 H15 V4 H12 Z M1 12 H4 V15 H1 Z M12 12 H15 V15 H12 Z" fill="#c5c5c5"/></svg>
<svg style="left:51px;top:180.4px;" width="16" height="16" viewBox="0 0 16 16"><path d="M10 11.5 H3 Q1.5 11.5 1.5 10 V4 Q1.5 2.5 3 2.5 H13 Q14.5 2.5 14.5 4 V8" fill="none" stroke="#c5c5c5" stroke-width="1"/><path d="M8 7 L14 11 L11.5 11.5 L12.5 14 L11.3 14.5 L10.3 12 L8.5 13.5 Z" fill="#c5c5c5"/></svg>
<svg style="left:51px;top:201.3px;" width="16" height="16" viewBox="0 0 16 16"><path d="M1.5 1.5 H14.5 V14.5 H1.5 Z" fill="none" stroke="#c5c5c5" stroke-width="1"/><path d="M4.5 8 L7 11 L11.5 4" fill="none" stroke="#c5c5c5" stroke-width="1.4"/></svg>
<svg style="left:51px;top:222.3px;" width="16" height="16" viewBox="0 0 16 16"><path d="M1 1 H15 V5 H1 Z" fill="#6fc3f7"/><path d="M3 2.5 H9 V3.5 H3 Z M11 2.3 H14 L12.5 4 Z" fill="#1e1e1e"/><path d="M1.5 5 V14.5 H14.5 V5" fill="none" stroke="#c5c5c5" stroke-width="1"/><path d="M4 7.5 H12 V8.5 H4 Z M4 10 H10 V11 H4 Z" fill="#c5c5c5"/></svg>
<svg style="left:51px;top:243.3px;" width="16" height="16" viewBox="0 0 16 16"><path d="M7 1 H9 V3 H7 Z M10 1 H12 V3 H10 Z M13 1 H15 V3 H13 Z M10 4 H12 V6 H10 Z M13 4 H15 V6 H13 Z M13 7 H15 V9 H13 Z M13 10 H15 V12 H13 Z" fill="#c5c5c5"/><path d="M1 6.5 Q1 5 4.5 5 Q8 5 8 6.5 V13.5 Q8 15 4.5 15 Q1 15 1 13.5 Z" fill="#6fc3f7"/></svg>
<svg style="left:51px;top:264.3px;" width="16" height="16" viewBox="0 0 16 16"><path d="M2 2 H5 V5 H2 Z M6.5 2 H9.5 V5 H6.5 Z M11 2 H14 V5 H11 Z M2 6.5 H5 V9.5 H2 Z M6.5 6.5 H9.5 V9.5 H6.5 Z M11 6.5 H14 V9.5 H11 Z M2 11 H5 V14 H2 Z M6.5 11 H9.5 V14 H6.5 Z M11 11 H14 V14 H11 Z" fill="#c5c5c5"/></svg>
<svg style="left:51px;top:285.3px;" width="16" height="16" viewBox="0 0 16 16"><path d="M1.5 1.5 H14.5 V14.5 H1.5 Z" fill="none" stroke="#c5c5c5" stroke-width="1"/><path d="M1 15 V10 L5 7 L8.5 10.5 L10.5 9 L15 12 V15 Z" fill="#6fc3f7"/><path d="M11 3 H13 V5 H11 Z" fill="#f5b942"/></svg>
<svg style="left:51px;top:306.2px;" width="16" height="16" viewBox="0 0 16 16"><path d="M6.5 1.5 H9.5 L14 15 H11.5 L10.5 11.5 H5.5 L4.5 15 H2 Z M6.2 9.3 H9.8 L8 3.8 Z" fill="#c5c5c5"/></svg>
<svg style="left:51px;top:327.2px;" width="16" height="16" viewBox="0 0 16 16"><path d="M1.5 1.5 H14.5 V14.5 H1.5 Z" fill="none" stroke="#c5c5c5" stroke-width="1"/><path d="M3.5 4 H8 V5 H3.5 Z M3.5 6.5 H9 V7.5 H3.5 Z M3.5 9 H8 V10 H3.5 Z M3.5 11.5 H9 V12.5 H3.5 Z" fill="#c5c5c5"/><path d="M10 2 H14 V7.5 H10 Z M10 8.5 H14 V14 H10 Z" fill="#6fc3f7"/><path d="M11 6 L12 4 L13 6 Z M11 10 L12 12 L13 10 Z" fill="#1e1e1e"/></svg>
<svg style="left:51px;top:348.2px;" width="16" height="16" viewBox="0 0 16 16"><circle cx="8" cy="8" r="5.5" fill="none" stroke="#c5c5c5" stroke-width="1.6"/><circle cx="8" cy="8" r="2" fill="#c5c5c5"/></svg>
<svg style="left:51px;top:369.2px;" width="16" height="16" viewBox="0 0 16 16"><path d="M1.5 2.5 H14.5 V13.5 H1.5 Z" fill="none" stroke="#c5c5c5" stroke-width="1"/></svg>
<svg style="left:51px;top:390.2px;" width="16" height="16" viewBox="0 0 16 16"><path d="M1.5 1.5 H14.5 V14.5 H1.5 Z" fill="none" stroke="#c5c5c5" stroke-width="1"/><path d="M4.5 3.5 H11.5 V10.5 H4.5 Z M4.5 5.5 H11.5 M4.5 7.5 H11.5 M3 12.5 H13" fill="none" stroke="#c5c5c5" stroke-width="1"/></svg>
<svg style="left:51px;top:411.1px;" width="16" height="16" viewBox="0 0 16 16"><path d="M1 7 H8 V9.5 H1 Z" fill="#6fc3f7"/><path d="M8 8 H11 V9.5 H8 Z M11 8.8 H15 V9.5 H11 Z" fill="#c5c5c5"/></svg>
<svg style="left:51px;top:432.1px;" width="16" height="16" viewBox="0 0 16 16"><path d="M1.5 1.5 H14.5 V14.5 H1.5 Z" fill="none" stroke="#c5c5c5" stroke-width="1"/><path d="M4 3.5 H12 V5.5 H9 V13 H7 V5.5 H4 Z" fill="#c5c5c5"/></svg>
<svg style="left:51px;top:453.1px;" width="16" height="16" viewBox="0 0 16 16"><path d="M1.5 2.5 H14.5 V13.5 H1.5 Z" fill="none" stroke="#c5c5c5" stroke-width="1"/><text x="8" y="10.5" font-size="7" font-family="Liberation Sans" font-weight="bold" fill="#c5c5c5" text-anchor="middle">abl</text></svg>
<svg style="left:51px;top:493.4px;" width="16" height="16" viewBox="0 0 16 16"><path d="M5 1 L11.5 7.5 L8.5 8 L10 11.5 L8.5 12 L7 8.5 L5 10.5 Z" fill="#c5c5c5"/></svg>
<svg style="left:51px;top:514.4px;" width="16" height="16" viewBox="0 0 16 16"><path d="M3.5 2.5 V13.5 M12.5 2.5 V13.5 M2.5 3.5 H13.5 M2.5 12.5 H13.5" fill="none" stroke="#c5c5c5" stroke-width="1"/><path d="M1 1 H4 V4 H1 Z M12 1 H15 V4 H12 Z M1 12 H4 V15 H1 Z M12 12 H15 V15 H12 Z" fill="#c5c5c5"/></svg>
<svg style="left:51px;top:535.3px;" width="16" height="16" viewBox="0 0 16 16"><path d="M10 11.5 H3 Q1.5 11.5 1.5 10 V4 Q1.5 2.5 3 2.5 H13 Q14.5 2.5 14.5 4 V8" fill="none" stroke="#c5c5c5" stroke-width="1"/><path d="M8 7 L14 11 L11.5 11.5 L12.5 14 L11.3 14.5 L10.3 12 L8.5 13.5 Z" fill="#c5c5c5"/></svg>
<svg style="left:51px;top:556.3px;" width="16" height="16" viewBox="0 0 16 16"><path d="M1.5 3.5 H14.5 V14.5 H1.5 Z M1.5 6.5 H14.5" fill="none" stroke="#c5c5c5" stroke-width="1"/><path d="M4 1 H5 V4 H4 Z M11 1 H12 V4 H11 Z" fill="#c5c5c5"/><text x="8" y="13" font-size="6" font-family="Liberation Sans" fill="#c5c5c5" text-anchor="middle">12</text></svg>
<svg style="left:51px;top:577.2px;" width="16" height="16" viewBox="0 0 16 16"><path d="M1.5 1.5 H14.5 V14.5 H1.5 Z M4.5 4.5 H8.5 V7.5 H4.5 Z M7.5 9.5 H12.5 V12.5 H7.5 Z" fill="none" stroke="#c5c5c5" stroke-width="1"/></svg>
<svg style="left:51px;top:598.2px;" width="16" height="16" viewBox="0 0 16 16"><path d="M1.5 1.5 H14.5 V14.5 H1.5 Z" fill="none" stroke="#c5c5c5" stroke-width="1"/><path d="M4.5 8 L7 11 L11.5 4" fill="none" stroke="#c5c5c5" stroke-width="1.4"/></svg>
<svg style="left:51px;top:619.2px;" width="16" height="16" viewBox="0 0 16 16"><path d="M1 1 H15 V5 H1 Z" fill="#6fc3f7"/><path d="M3 2.5 H9 V3.5 H3 Z M11 2.3 H14 L12.5 4 Z" fill="#1e1e1e"/><path d="M1.5 5 V14.5 H14.5 V5" fill="none" stroke="#c5c5c5" stroke-width="1"/><path d="M4 7.5 H12 V8.5 H4 Z M4 10 H10 V11 H4 Z" fill="#c5c5c5"/></svg>
<svg style="left:51px;top:640.1px;" width="16" height="16" viewBox="0 0 16 16"><path d="M5.5 1.5 H14.5 V14.5 H9" fill="none" stroke="#c5c5c5" stroke-width="1"/><circle cx="5" cy="11" r="3.5" fill="none" stroke="#c5c5c5" stroke-width="1.5"/><path d="M4 11 L7 8 L7.5 8.5 L4.5 11.5 Z" fill="#c5c5c5"/></svg>
<svg style="left:51px;top:661.1px;" width="16" height="16" viewBox="0 0 16 16"><path d="M7 1 H9 V3 H7 Z M10 1 H12 V3 H10 Z M13 1 H15 V3 H13 Z M10 4 H12 V6 H10 Z M13 4 H15 V6 H13 Z M13 7 H15 V9 H13 Z M13 10 H15 V12 H13 Z" fill="#c5c5c5"/><path d="M1 6.5 Q1 5 4.5 5 Q8 5 8 6.5 V13.5 Q8 15 4.5 15 Q1 15 1 13.5 Z" fill="#6fc3f7"/></svg>
<svg style="left:51px;top:682.0px;" width="16" height="16" viewBox="0 0 16 16"><path d="M1.5 1.5 H14.5 V14.5 H1.5 Z M1.5 5.5 H14.5" fill="none" stroke="#c5c5c5" stroke-width="1"/><path d="M10 2.5 H13 L11.5 4.5 Z M4 7 H6 V9 H4 Z M7 7 H9 V9 H7 Z M10 7 H12 V9 H10 Z M4 10 H6 V12 H4 Z M7 10 H9 V12 H7 Z M10 10 H12 V12 H10 Z" fill="#c5c5c5"/></svg>
<svg style="left:51px;top:703.0px;" width="16" height="16" viewBox="0 0 16 16"><path d="M1.5 1.5 H14.5 V14.5 H1.5 Z M1.5 5.5 H14.5 M5.5 5.5 V14.5" fill="none" stroke="#c5c5c5" stroke-width="1"/></svg>
<svg style="left:51px;top:724.0px;" width="16" height="16" viewBox="0 0 16 16"><path d="M6.5 1.5 H12 L14.5 4 V14.5 H10" fill="none" stroke="#c5c5c5" stroke-width="1"/><circle cx="5.5" cy="10.5" r="4" fill="none" stroke="#c5c5c5" stroke-width="1.4"/><path d="M5.5 8 V10.5 H8" fill="none" stroke="#c5c5c5" stroke-width="1"/></svg>
<svg style="left:51px;top:744.9px;" width="16" height="16" viewBox="0 0 16 16"><ellipse cx="8" cy="8" rx="6.5" ry="4.5" fill="none" stroke="#c5c5c5" stroke-width="1.2"/></svg>
<svg style="left:51px;top:765.9px;" width="16" height="16" viewBox="0 0 16 16"><circle cx="8" cy="8" r="6" fill="none" stroke="#c5c5c5" stroke-width="1.5"/><path d="M5.5 6 L8 8.5 L10.5 6 M5.5 9 L8 11.5 L10.5 9" fill="none" stroke="#c5c5c5" stroke-width="1"/></svg>
<svg style="left:51px;top:786.8px;" width="16" height="16" viewBox="0 0 16 16"><path d="M1.5 6.5 H14.5 V14.5 H1.5 Z M3 6.5 L8 2 L13 6.5" fill="none" stroke="#c5c5c5" stroke-width="1"/></svg>
<svg style="left:51px;top:807.8px;" width="16" height="16" viewBox="0 0 16 16"><path d="M2 2 H5 V5 H2 Z M6.5 2 H9.5 V5 H6.5 Z M11 2 H14 V5 H11 Z M2 6.5 H5 V9.5 H2 Z M6.5 6.5 H9.5 V9.5 H6.5 Z M11 6.5 H14 V9.5 H11 Z M2 11 H5 V14 H2 Z M6.5 11 H9.5 V14 H6.5 Z M11 11 H14 V14 H11 Z" fill="#c5c5c5"/></svg>
<svg style="left:51px;top:828.8px;" width="16" height="16" viewBox="0 0 16 16"><path d="M7.3 1 H8.7 V15 H7.3 Z" fill="#c5c5c5"/><path d="M1 8 H6 M10 8 H15 M3.5 5.5 L1 8 L3.5 10.5 M12.5 5.5 L15 8 L12.5 10.5" fill="none" stroke="#c5c5c5" stroke-width="1.4"/></svg>
<svg style="left:51px;top:849.7px;" width="16" height="16" viewBox="0 0 16 16"><path d="M4 3.5 H1.5 V14.5 H14.5 V3.5 H12" fill="none" stroke="#c5c5c5" stroke-width="1"/><text x="8" y="6" font-size="6" font-family="Liberation Sans" fill="#c5c5c5" text-anchor="middle">XY</text></svg>
<svg style="left:51px;top:870.7px;" width="16" height="16" viewBox="0 0 16 16"><path d="M1.5 1.5 H14.5 V14.5 H1.5 Z" fill="none" stroke="#c5c5c5" stroke-width="1"/><path d="M1 15 V10 L5 7 L8.5 10.5 L10.5 9 L15 12 V15 Z" fill="#6fc3f7"/><path d="M11 3 H13 V5 H11 Z" fill="#f5b942"/></svg>
<svg style="left:51px;top:891.6px;" width="16" height="16" viewBox="0 0 16 16"><path d="M6.5 1.5 H9.5 L14 15 H11.5 L10.5 11.5 H5.5 L4.5 15 H2 Z M6.2 9.3 H9.8 L8 3.8 Z" fill="#c5c5c5"/></svg>
<svg style="left:51px;top:912.6px;" width="16" height="16" viewBox="0 0 16 16"><path d="M1.5 1.5 H14.5 V14.5 H1.5 Z" fill="none" stroke="#c5c5c5" stroke-width="1"/><path d="M3.5 4 H8 V5 H3.5 Z M3.5 6.5 H9 V7.5 H3.5 Z M3.5 9 H8 V10 H3.5 Z M3.5 11.5 H9 V12.5 H3.5 Z" fill="#c5c5c5"/><path d="M10 2 H14 V7.5 H10 Z M10 8.5 H14 V14 H10 Z" fill="#6fc3f7"/><path d="M11 6 L12 4 L13 6 Z M11 10 L12 12 L13 10 Z" fill="#1e1e1e"/></svg>
<svg style="left:51px;top:933.6px;" width="16" height="16" viewBox="0 0 16 16"><path d="M1.5 1.5 H14.5 V14.5 H1.5 Z" fill="none" stroke="#c5c5c5" stroke-width="1"/><path d="M4 4.5 H12 V5.5 H4 Z M4 7 H11 V8 H4 Z M4 9.5 H12 V10.5 H4 Z M4 12 H9 V13 H4 Z" fill="#c5c5c5"/></svg>
<svg style="left:51px;top:954.5px;" width="16" height="16" viewBox="0 0 16 16"><path d="M1.5 2.5 H14.5 V13.5 H1.5 Z M3.5 2.5 V13.5 M12.5 2.5 V13.5" fill="none" stroke="#c5c5c5" stroke-width="1"/><path d="M6.5 5.5 L10 8 L6.5 10.5 Z" fill="none" stroke="#c5c5c5" stroke-width="1"/></svg>
<svg style="left:51px;top:975.5px;" width="16" height="16" viewBox="0 0 16 16"><path d="M1.5 1.5 H8.5 V3.5 H1.5 Z M1.5 5.5 H14.5 V14.5 H1.5 Z" fill="none" stroke="#c5c5c5" stroke-width="1"/><path d="M4 8 H10 V9 H4 Z M4 10.5 H8 V11.5 H4 Z" fill="#c5c5c5"/></svg>
<svg style="left:51px;top:996.4px;" width="16" height="16" viewBox="0 0 16 16"><path d="M1.5 2.5 H14.5 V13.5 H1.5 Z" fill="none" stroke="#c5c5c5" stroke-width="1"/><text x="8" y="10.5" font-size="7" font-family="Liberation Sans" fill="#c5c5c5" text-anchor="middle">**</text></svg>
<svg style="left:1865px;top:81px;" width="7" height="4" viewBox="0 0 7 4"><path d="M0 0 H7 L3.5 4 Z" fill="#d0d0d0"/></svg>
<svg style="left:1881px;top:78px;" width="8" height="11" viewBox="0 0 8 11"><path d="M2 0.5 H6 V6 H7.5 V7 H0.5 V6 H2 Z" fill="none" stroke="#d8d8d8" stroke-width="1"/><path d="M4 7 V11" stroke="#d8d8d8" stroke-width="1.2"/><path d="M4.5 1 V6" stroke="#d8d8d8" stroke-width="1"/></svg>
<svg style="left:1897px;top:78.5px;" width="9" height="9" viewBox="0 0 9 9"><path d="M0.5 0.5 L8.5 8.5 M8.5 0.5 L0.5 8.5" stroke="#d8d8d8" stroke-width="1.3"/></svg>
<svg style="left:1701px;top:101px;" width="13" height="13" viewBox="0 0 13 13"><circle cx="6.5" cy="6.5" r="6" fill="none" stroke="#4a4a4a" stroke-width="1"/><path d="M10 6.5 H3.5 M6 4 L3.5 6.5 L6 9" fill="none" stroke="#4a4a4a" stroke-width="1"/></svg>
<svg style="left:1723px;top:101px;" width="13" height="13" viewBox="0 0 13 13"><circle cx="6.5" cy="6.5" r="6" fill="none" stroke="#4a4a4a" stroke-width="1"/><path d="M3 6.5 H9.5 M7 4 L9.5 6.5 L7 9" fill="none" stroke="#4a4a4a" stroke-width="1"/></svg>
<svg style="left:1744px;top:101px;" width="15" height="14" viewBox="0 0 15 14"><path d="M1 7.5 L7.5 1 L14 7.5 M3 6 V13.5 H6 V9.5 H9 V13.5 H12 V6" fill="none" stroke="#e0e0e0" stroke-width="1.3"/></svg>
<svg style="left:1766px;top:101px;" width="16" height="16" viewBox="0 0 16 16"><path d="M6.5 0.5 H15.5 V11.5 H6.5 Z" fill="#1f1f1f" stroke="#e0e0e0" stroke-width="1"/><path d="M8.5 3 H9.5 M10.5 3 H14 M8.5 5.5 H9.5 M10.5 5.5 H14 M8.5 8 H9.5 M10.5 8 H14" stroke="#e0e0e0" stroke-width="1"/><path d="M0.5 8 L2 7 L5 9.5 L9 6 L10 6.5 V14.5 L9 15 L5 11.5 L2 14 L0.5 13 Z M2 9.5 V12 L3.5 10.7 Z M9 8.5 L6.5 10.7 L9 12.8 Z" fill="#b180f0" fill-rule="evenodd"/></svg>
<div class="a" style="left:1788px;top:98px;width:1px;height:20px;background:#3f3f3f;"></div>
<svg style="left:1796px;top:99px;" width="16" height="17" viewBox="0 0 16 17"><path d="M1 0.5 H7 L4.5 3.5 V6 L3.5 5 V3.5 Z" fill="#4ba6f5"/><circle cx="9.5" cy="10.5" r="5.3" fill="none" stroke="#e0e0e0" stroke-width="1.3"/><path d="M9.5 7.5 V10.8 H12" fill="none" stroke="#e0e0e0" stroke-width="1.1"/></svg>
<svg style="left:1819px;top:107px;" width="6" height="3.5" viewBox="0 0 6 3.5"><path d="M0 0 H6 L3.0 3.5 Z" fill="#d0d0d0"/></svg>
<svg style="left:1832px;top:103px;" width="14" height="11" viewBox="0 0 14 11"><path d="M1 3 H13 M1 3 L4 0.5 M13 8 H1 M13 8 L10 10.5" fill="none" stroke="#e0e0e0" stroke-width="1.3"/></svg>
<svg style="left:1853px;top:100px;" width="16" height="16" viewBox="0 0 16 16"><path d="M3.5 0.5 H15.5 V12.5 M0.5 3.5 H12.5 V15.5 H0.5 Z" fill="none" stroke="#e0e0e0" stroke-width="1.1"/><path d="M3 9.5 H10" stroke="#e0e0e0" stroke-width="1.3"/></svg>
<svg style="left:1875px;top:100px;" width="16" height="16" viewBox="0 0 16 16"><path d="M5.5 0.5 H15.5 V10.5 H5.5 Z M0.5 5.5 H10.5 V15.5 H0.5 Z M3 3 V3" fill="none" stroke="#e0e0e0" stroke-width="1.1"/></svg>
<svg style="left:1904px;top:99px;" width="8" height="5" viewBox="0 0 8 5"><path d="M0 0 L3 2.5 L0 5 Z M4.5 0 L7.5 2.5 L4.5 5 Z" fill="#c0c0c0"/></svg>
<svg style="left:1885px;top:127px;" width="13" height="13" viewBox="0 0 13 13"><circle cx="8.5" cy="4.5" r="3.6" fill="none" stroke="#d0d0d0" stroke-width="1.6"/><path d="M6 7 L1 12" stroke="#d0d0d0" stroke-width="2.2" stroke-linecap="round"/></svg>
<svg style="left:1900px;top:131px;" width="6" height="3.5" viewBox="0 0 6 3.5"><path d="M0 0 H6 L3.0 3.5 Z" fill="#d0d0d0"/></svg>
<svg style="left:1707px;top:147px;" width="16" height="15" viewBox="0 0 16 15"><path d="M0.5 13.5 V0.5 H14.5 V5 M0.5 3.5 H14.5" fill="none" stroke="#e0e0e0" stroke-width="1.1"/><path d="M5.5 9 L7 8 L10 10.5 L14 7 L15 7.5 V14.5 L14 15 L10 12 L7 14.5 L5.5 13.5 Z M7 10 V12.5 L8.5 11.2 Z M14 9.3 L11.5 11.2 L14 13.3 Z" fill="#b180f0" fill-rule="evenodd"/></svg>
<svg style="left:1703px;top:171px;" width="7" height="7" viewBox="0 0 7 7"><path d="M7 0 V7 H0 Z" fill="#d8d8d8"/></svg>
<svg style="left:1725px;top:168px;" width="16" height="13" viewBox="0 0 16 13"><path d="M0.5 0.5 H14.5 V12 H0.5 Z" fill="none" stroke="#e0e0e0" stroke-width="1"/><text x="7.5" y="9.5" font-size="8.5" font-family="Liberation Sans" font-weight="bold" fill="#7fd17f" text-anchor="middle">C#</text></svg>
<svg style="left:1722px;top:189px;" width="6" height="9" viewBox="0 0 6 9"><path d="M0.6 0.6 L5.4 4.5 L0.6 8.4 Z" fill="none" stroke="#d8d8d8" stroke-width="1.1"/></svg>
<svg style="left:1722px;top:208px;" width="6" height="9" viewBox="0 0 6 9"><path d="M0.6 0.6 L5.4 4.5 L0.6 8.4 Z" fill="none" stroke="#d8d8d8" stroke-width="1.1"/></svg>
<svg style="left:1722px;top:246px;" width="6" height="9" viewBox="0 0 6 9"><path d="M0.6 0.6 L5.4 4.5 L0.6 8.4 Z" fill="none" stroke="#d8d8d8" stroke-width="1.1"/></svg>
<svg style="left:1743px;top:187px;" width="17" height="11" viewBox="0 0 17 11"><path d="M0.5 5.5 H4.5 V9.5 H0.5 Z M8.5 4.5 H12.5 V10.5 H8.5 Z M12.5 0.5 H16.5 V5.5 H12.5 Z M4 1.5 H8 V5" fill="none" stroke="#e0e0e0" stroke-width="1"/><path d="M4.5 7.5 H8.5" stroke="#888" stroke-width="1.5"/></svg>
<svg style="left:1743px;top:205px;" width="15" height="15" viewBox="0 0 15 15"><path d="M3.5 9 V0.5 H9.5 L12.5 3.5 V13 M9.5 0.5 V3.5 H12.5" fill="#2b2b2b" stroke="#e0e0e0" stroke-width="1"/><path d="M3 9.5 L1 11.5 L3 13.5 M9 9.5 L11 11.5 L9 13.5" fill="none" stroke="#e0e0e0" stroke-width="1"/><rect x="4.8" y="10.3" width="2.6" height="2.6" fill="#4ba6f5"/></svg>
<svg style="left:1743px;top:243px;" width="15" height="15" viewBox="0 0 15 15"><path d="M3.5 9 V0.5 H9.5 L12.5 3.5 V13 M9.5 0.5 V3.5 H12.5" fill="#2b2b2b" stroke="#e0e0e0" stroke-width="1"/><path d="M3 9.5 L1 11.5 L3 13.5 M9 9.5 L11 11.5 L9 13.5" fill="none" stroke="#e0e0e0" stroke-width="1"/><rect x="4.8" y="10.3" width="2.6" height="2.6" fill="#4ba6f5"/></svg>
<div class="t" style="left:1743px;top:223.84px;font-size:12px;color:#7fd17f;font-family:'Liberation Sans',sans-serif;font-weight:bold;">C#</div>
<div class="a" style="left:1912px;top:143px;width:8px;height:21px;background:#1f1f1f;"></div>
<div class="a" style="left:1913px;top:143px;width:1px;height:21px;background:#3a3a3a;"></div>
<svg style="left:12px;top:37px;" width="4" height="17" viewBox="0 0 4 17"><rect x="0" y="0" width="1" height="1" fill="#606060"/><rect x="3" y="1.5" width="1" height="1" fill="#606060"/><rect x="0" y="3" width="1" height="1" fill="#606060"/><rect x="3" y="4.5" width="1" height="1" fill="#606060"/><rect x="0" y="6" width="1" height="1" fill="#606060"/><rect x="3" y="7.5" width="1" height="1" fill="#606060"/><rect x="0" y="9" width="1" height="1" fill="#606060"/><rect x="3" y="10.5" width="1" height="1" fill="#606060"/><rect x="0" y="12" width="1" height="1" fill="#606060"/><rect x="3" y="13.5" width="1" height="1" fill="#606060"/><rect x="0" y="15" width="1" height="1" fill="#606060"/><rect x="3" y="16.5" width="1" height="1" fill="#606060"/></svg>
<svg style="left:25px;top:39px;" width="14" height="14" viewBox="0 0 14 14"><circle cx="7" cy="7" r="6.3" fill="none" stroke="#4da3f0" stroke-width="1.3"/><path d="M10.5 7 H3.8 M6.5 4.2 L3.8 7 L6.5 9.8" fill="none" stroke="#4da3f0" stroke-width="1.3"/></svg>
<svg style="left:46px;top:45.5px;" width="6" height="3.5" viewBox="0 0 6 3.5"><path d="M0 0 H6 L3.0 3.5 Z" fill="#d0d0d0"/></svg>
<svg style="left:59px;top:39px;" width="14" height="14" viewBox="0 0 14 14"><circle cx="7" cy="7" r="6.3" fill="none" stroke="#505050" stroke-width="1.1"/><path d="M3.5 7 H10.2 M7.5 4.2 L10.2 7 L7.5 9.8" fill="none" stroke="#505050" stroke-width="1.1"/></svg>
<div class="a" style="left:80px;top:36px;width:1px;height:20px;background:#3c3c3c;"></div>
<svg style="left:89px;top:38px;" width="17" height="16" viewBox="0 0 17 16"><path d="M4 0.5 V7 M0.8 3.7 H7.2 M1.8 1.5 L6.2 5.9 M6.2 1.5 L1.8 5.9" stroke="#f0d060" stroke-width="1"/><path d="M6.5 2.5 H15.5 V11.5 H13" fill="none" stroke="#c8c8c8" stroke-width="1"/><path d="M4.5 8.5 H12.5 V15.5 H4.5 Z" fill="#2a2a2a" stroke="#e8e8e8" stroke-width="1.1"/><path d="M2.5 5.5 V13.5 H4.5" fill="none" stroke="#c8c8c8" stroke-width="1"/></svg>
<svg style="left:111px;top:45.5px;" width="6" height="3.5" viewBox="0 0 6 3.5"><path d="M0 0 H6 L3.0 3.5 Z" fill="#d0d0d0"/></svg>
<svg style="left:124px;top:38px;" width="15" height="15" viewBox="0 0 15 15"><path d="M0.5 4.5 H5 L6.5 6 H9 V14.5 H0.5 Z" fill="#e2c27a"/><path d="M2 8.5 H14.5 L12.5 14.5 H0.5 Z" fill="#b9a270" stroke="#e2c27a" stroke-width="1"/><path d="M8 7 Q9 2.5 13 2.5 M11 0.8 L13.3 2.5 L11 4.3" fill="none" stroke="#4da3f0" stroke-width="1.3"/></svg>
<svg style="left:146px;top:39px;" width="15" height="15" viewBox="0 0 15 15"><path d="M0.8 0.8 H11.5 L14.2 3.5 V14.2 H0.8 Z" fill="#1f1f1f" stroke="#4da3f0" stroke-width="1.4"/><path d="M3.5 1 V5 H10.5 V1 M3 14 V8.5 H12 V14" fill="none" stroke="#4da3f0" stroke-width="1.3"/></svg>
<svg style="left:168px;top:39px;" width="15" height="15" viewBox="0 0 15 15"><path d="M0.8 0.8 H11.5 L14.2 3.5 V14.2 H0.8 Z" fill="#1f1f1f" stroke="#4da3f0" stroke-width="1.4"/><path d="M3.5 1 V5 H10.5 V1 M3 14 V8.5 H12 V14" fill="none" stroke="#4da3f0" stroke-width="1.3"/></svg>
<svg style="left:170px;top:38px;" width="14" height="3" viewBox="0 0 14 3"><path d="M2 0.8 H12 L13.5 2.3" fill="none" stroke="#4da3f0" stroke-width="1"/></svg>
<div class="a" style="left:189px;top:36px;width:1px;height:20px;background:#3c3c3c;"></div>
<svg style="left:198px;top:39px;" width="14" height="15" viewBox="0 0 14 15"><path d="M2 1 V5.5 H6.5 M2.3 5.3 C4 2 9 1.5 11.5 4.5 C13.5 7 12 10.5 8.5 14.5" fill="none" stroke="#dadada" stroke-width="1.3"/></svg>
<svg style="left:219px;top:45.5px;" width="6" height="3.5" viewBox="0 0 6 3.5"><path d="M0 0 H6 L3.0 3.5 Z" fill="#d0d0d0"/></svg>
<svg style="left:233px;top:39px;" width="14" height="15" viewBox="0 0 14 15"><path d="M12 1 V5.5 H7.5 M11.7 5.3 C10 2 5 1.5 2.5 4.5 C0.5 7 2 10.5 5.5 14.5" fill="none" stroke="#4a4a4a" stroke-width="1.3"/></svg>
<svg style="left:255px;top:45.5px;" width="6" height="3.5" viewBox="0 0 6 3.5"><path d="M0 0 H6 L3.0 3.5 Z" fill="#4a4a4a"/></svg>
<div class="a" style="left:267px;top:36px;width:1px;height:20px;background:#3c3c3c;"></div>
<svg style="left:623px;top:45px;" width="6" height="3.5" viewBox="0 0 6 3.5"><path d="M0 0 H6 L3.0 3.5 Z" fill="#d0d0d0"/></svg>
<svg style="left:638px;top:39px;" width="11" height="13" viewBox="0 0 11 13"><path d="M1 1 L10 6.5 L1 12 Z" fill="none" stroke="#6ec46e" stroke-width="1.4"/></svg>
<svg style="left:660px;top:38px;" width="14" height="15" viewBox="0 0 14 15"><path d="M7 14.5 C3 14.5 1 11.5 1.5 8.5 C2 6 4 5 4.5 2.5 C5.5 4 6 5 6 6.5 C7.5 4.5 8.5 2.5 8 0.5 C11 2.5 13 6 12.8 9.5 C12.5 12.5 10.5 14.5 7 14.5 Z" fill="#3c3c3c"/><path d="M7 12.5 C5 12.5 4.2 11 4.5 9.5 C5 10.5 6 10.8 6.5 10 C6.2 8.5 7.5 7 8.5 6.5 C8.8 8 10 9 9.8 10.5 C9.5 12 8.5 12.5 7 12.5 Z" fill="#2a2a2a"/></svg>
<svg style="left:681px;top:45px;" width="6" height="3.5" viewBox="0 0 6 3.5"><path d="M0 0 H6 L3.0 3.5 Z" fill="#4a4a4a"/></svg>
<div class="a" style="left:692px;top:36px;width:1px;height:20px;background:#3c3c3c;"></div>
<svg style="left:700px;top:40px;" width="17" height="14" viewBox="0 0 17 14"><path d="M0.5 1.5 H5.5 L7 3 H13 V11.5 H0.5 Z" fill="#e2c27a" stroke="#e2c27a" stroke-width="1"/><path d="M1.5 4.5 H12.5" stroke="#9c8a5c" stroke-width="1"/><circle cx="12" cy="8.5" r="3" fill="#1f1f1f" stroke="#4da3f0" stroke-width="1.3"/><path d="M10 10.5 L7.5 13.5" stroke="#4da3f0" stroke-width="1.6"/></svg>
<div class="a" style="left:722px;top:36px;width:1px;height:20px;background:#3c3c3c;"></div>
<svg style="left:730px;top:40px;" width="16" height="14" viewBox="0 0 16 14"><path d="M0.5 0.5 H15.5 V11.5 H10 M0.5 0.5 V11.5 H3 M0.5 3.5 H15.5" fill="none" stroke="#dadada" stroke-width="1"/><path d="M2.5 10 L6 6.8 L9.5 10 M3.8 9 V13.5 H8.2 V9" fill="#1f1f1f" stroke="#4da3f0" stroke-width="1.2"/></svg>
<svg style="left:753px;top:49px;" width="7" height="6" viewBox="0 0 7 6"><rect x="0.5" y="0" width="6" height="1.2" fill="#d8d8d8"/><path d="M0 2.5 H7 L3.5 6 Z" fill="#d8d8d8"/></svg>
<svg style="left:765px;top:37px;" width="4" height="17" viewBox="0 0 4 17"><rect x="0" y="0" width="1" height="1" fill="#606060"/><rect x="3" y="1.5" width="1" height="1" fill="#606060"/><rect x="0" y="3" width="1" height="1" fill="#606060"/><rect x="3" y="4.5" width="1" height="1" fill="#606060"/><rect x="0" y="6" width="1" height="1" fill="#606060"/><rect x="3" y="7.5" width="1" height="1" fill="#606060"/><rect x="0" y="9" width="1" height="1" fill="#606060"/><rect x="3" y="10.5" width="1" height="1" fill="#606060"/><rect x="0" y="12" width="1" height="1" fill="#606060"/><rect x="3" y="13.5" width="1" height="1" fill="#606060"/><rect x="0" y="15" width="1" height="1" fill="#606060"/><rect x="3" y="16.5" width="1" height="1" fill="#606060"/></svg>
<svg style="left:778px;top:41px;" width="11" height="10" viewBox="0 0 11 10"><rect x="0" y="0" width="3.8" height="10" fill="#404040"/><rect x="6.2" y="0" width="3.8" height="10" fill="#404040"/></svg>
<div class="a" style="left:800px;top:41px;width:9px;height:9px;background:#404040;"></div>
<svg style="left:820px;top:39px;" width="14" height="14" viewBox="0 0 14 14"><path d="M9.5 2.2 A5.8 5.8 0 1 1 3.2 3 M9.2 0 V3.2 H12.5" fill="none" stroke="#404040" stroke-width="1.3"/></svg>
<div class="a" style="left:841px;top:36px;width:1px;height:20px;background:#3c3c3c;"></div>
<svg style="left:851px;top:41px;" width="14" height="11" viewBox="0 0 14 11"><path d="M0 5.5 H12.5 M7.5 0.5 L12.8 5.5 L7.5 10.5" fill="none" stroke="#505050" stroke-width="1.2"/></svg>
<svg style="left:873px;top:38px;" width="8" height="16" viewBox="0 0 8 16"><path d="M4 0 V9 M1 6 L4 9.2 L7 6" fill="none" stroke="#4da3f0" stroke-width="1.3"/><circle cx="4" cy="13.5" r="2" fill="#4da3f0"/></svg>
<svg style="left:893px;top:41px;" width="16" height="13" viewBox="0 0 16 13"><path d="M1.5 7.5 C2.5 2.5 11 1 13.5 5.5 M13.8 1.5 V6 H9.5" fill="none" stroke="#4da3f0" stroke-width="1.4"/><circle cx="7.5" cy="10.5" r="2" fill="#4da3f0"/></svg>
<svg style="left:918px;top:38px;" width="8" height="16" viewBox="0 0 8 16"><path d="M4 10 V0.8 M1 3.8 L4 0.6 L7 3.8" fill="none" stroke="#484848" stroke-width="1.3"/><circle cx="4" cy="13.5" r="1.8" fill="#484848"/></svg>
<div class="a" style="left:937px;top:36px;width:1px;height:20px;background:#3c3c3c;"></div>
<svg style="left:945px;top:39px;" width="15" height="14" viewBox="0 0 15 14"><path d="M1 5 C4 0 10 0 14 4 M1 10 C4 14 10 14 14 9" fill="none" stroke="#9a7de8" stroke-width="1.3"/><path d="M1 12 L14 1 M1 2 L14 12" stroke="#4da3f0" stroke-width="1.3"/></svg>
<svg style="left:968px;top:48px;" width="7" height="6" viewBox="0 0 7 6"><rect x="0.5" y="0" width="6" height="1.2" fill="#d8d8d8"/><path d="M0 2.5 H7 L3.5 6 Z" fill="#d8d8d8"/></svg>
<svg style="left:980px;top:37px;" width="4" height="17" viewBox="0 0 4 17"><rect x="0" y="0" width="1" height="1" fill="#606060"/><rect x="3" y="1.5" width="1" height="1" fill="#606060"/><rect x="0" y="3" width="1" height="1" fill="#606060"/><rect x="3" y="4.5" width="1" height="1" fill="#606060"/><rect x="0" y="6" width="1" height="1" fill="#606060"/><rect x="3" y="7.5" width="1" height="1" fill="#606060"/><rect x="0" y="9" width="1" height="1" fill="#606060"/><rect x="3" y="10.5" width="1" height="1" fill="#606060"/><rect x="0" y="12" width="1" height="1" fill="#606060"/><rect x="3" y="13.5" width="1" height="1" fill="#606060"/><rect x="0" y="15" width="1" height="1" fill="#606060"/><rect x="3" y="16.5" width="1" height="1" fill="#606060"/></svg>
<div class="t" style="left:991px;top:38.96px;font-size:9.5px;color:#e0e0e0;font-family:'Liberation Sans',sans-serif;font-weight:bold;">abc</div>
<svg style="left:994px;top:48px;" width="9" height="6" viewBox="0 0 9 6"><path d="M0.5 2.5 L3.5 5 L8.5 0.5" fill="none" stroke="#57c15a" stroke-width="1.4"/></svg>
<div class="a" style="left:1012px;top:36px;width:1px;height:20px;background:#3c3c3c;"></div>
<svg style="left:1020px;top:38px;" width="17" height="16" viewBox="0 0 17 16"><path d="M0.5 0.5 L8 7 L5 7.5 L6.5 10.5 L5 11 L3.5 8 L0.5 10 Z" fill="#4da3f0"/><path d="M4 11.5 V15 H16 V10.5 H9 M6.5 12.5 H14" fill="none" stroke="#dadada" stroke-width="1.1"/></svg>
<svg style="left:1042px;top:39px;" width="16" height="14" viewBox="0 0 16 14"><path d="M3.5 3 H1 V13 H3.5 M2 3 L5 0.5 M2 3 L5 5" fill="none" stroke="#4da3f0" stroke-width="1.2"/><path d="M6.5 0.5 V13.5 M8 1.5 H15 M8 4 H15 M8 6.5 H15 M8 9 H15 M8 11.5 H15" stroke="#dadada" stroke-width="1"/></svg>
<div class="a" style="left:1064px;top:36px;width:1px;height:20px;background:#3c3c3c;"></div>
<svg style="left:1074px;top:40px;" width="13" height="13" viewBox="0 0 13 13"><path d="M0 1 H3 M4 3.5 H12 M4 6 H12 M4 8.5 H12" stroke="#6ad36a" stroke-width="1.1"/><path d="M0 1 H3 M3 11 H12 M4 3.5 H4" stroke="#dadada" stroke-width="1.1"/></svg>
<svg style="left:1094px;top:39px;" width="16" height="14" viewBox="0 0 16 14"><path d="M5 0.5 L2 3 L5 5.5 M2 3 H5.5 C8 3 8.5 6 7 8 L4 11" fill="none" stroke="#4da3f0" stroke-width="1.2"/><path d="M8 4 H15 M9 6.5 H15 M9 9 H15 M6 11.5 H15" stroke="#dadada" stroke-width="1"/></svg>
<div class="a" style="left:1116px;top:36px;width:1px;height:20px;background:#3c3c3c;"></div>
<svg style="left:1127px;top:39px;" width="11" height="15" viewBox="0 0 11 15"><path d="M0.8 0.8 H10.2 V14 L5.5 10 L0.8 14 Z" fill="#303030" stroke="#dadada" stroke-width="1.4"/></svg>
<svg style="left:1147px;top:39px;" width="14" height="15" viewBox="0 0 14 15"><path d="M3.8 0.8 H12.2 V14 L8 10.5 L3.8 14 Z" fill="none" stroke="#484848" stroke-width="1.3"/></svg>
<svg style="left:1168px;top:39px;" width="14" height="15" viewBox="0 0 14 15"><path d="M3.8 0.8 H12.2 V14 L8 10.5 L3.8 14 Z" fill="none" stroke="#484848" stroke-width="1.3"/></svg>
<svg style="left:1190px;top:39px;" width="14" height="15" viewBox="0 0 14 15"><path d="M3.8 0.8 H12.2 V14 L8 10.5 L3.8 14 Z" fill="none" stroke="#484848" stroke-width="1.3"/></svg>
<svg style="left:1147px;top:43px;" width="6" height="6" viewBox="0 0 6 6"><path d="M6 3 H0.5 M2.5 0.8 L0.5 3 L2.5 5.2" fill="none" stroke="#484848" stroke-width="1.1"/></svg>
<svg style="left:1168px;top:43px;" width="7" height="6" viewBox="0 0 7 6"><path d="M0 3 H6 M4 0.8 L6 3 L4 5.2" fill="none" stroke="#484848" stroke-width="1.1"/></svg>
<svg style="left:1190px;top:38px;" width="6" height="6" viewBox="0 0 6 6"><path d="M0.5 0.5 L5.5 5.5 M5.5 0.5 L0.5 5.5" stroke="#484848" stroke-width="1.1"/></svg>
<svg style="left:1213px;top:48px;" width="7" height="6" viewBox="0 0 7 6"><rect x="0.5" y="0" width="6" height="1.2" fill="#d8d8d8"/><path d="M0 2.5 H7 L3.5 6 Z" fill="#d8d8d8"/></svg>
<svg style="left:1226px;top:37px;" width="4" height="17" viewBox="0 0 4 17"><rect x="0" y="0" width="1" height="1" fill="#606060"/><rect x="3" y="1.5" width="1" height="1" fill="#606060"/><rect x="0" y="3" width="1" height="1" fill="#606060"/><rect x="3" y="4.5" width="1" height="1" fill="#606060"/><rect x="0" y="6" width="1" height="1" fill="#606060"/><rect x="3" y="7.5" width="1" height="1" fill="#606060"/><rect x="0" y="9" width="1" height="1" fill="#606060"/><rect x="3" y="10.5" width="1" height="1" fill="#606060"/><rect x="0" y="12" width="1" height="1" fill="#606060"/><rect x="3" y="13.5" width="1" height="1" fill="#606060"/><rect x="0" y="15" width="1" height="1" fill="#606060"/><rect x="3" y="16.5" width="1" height="1" fill="#606060"/></svg>
<svg style="left:1237px;top:41px;" width="13" height="10" viewBox="0 0 13 10"><path d="M0 3 H13 M3.5 0 V10 M5.5 4.5 H9 V8 H5.5 Z" fill="none" stroke="#484848" stroke-width="1.1"/></svg>
<div class="a" style="left:1257px;top:36px;width:1px;height:20px;background:#3c3c3c;"></div>
<svg style="left:1266px;top:40px;" width="15" height="13" viewBox="0 0 15 13"><path d="M0.8 0 V13 M3 2 H13.5 V4.5 H3 Z M3 7.5 H10 V10 H3 Z" fill="none" stroke="#555555" stroke-width="1.1"/></svg>
<svg style="left:1288px;top:40px;" width="13" height="13" viewBox="0 0 13 13"><path d="M6.5 0 V13 M1 2 H12 V4.8 H1 Z M2.5 7.5 H10.5 V10.3 H2.5 Z" fill="none" stroke="#555555" stroke-width="1.1"/></svg>
<svg style="left:1310px;top:40px;" width="15" height="13" viewBox="0 0 15 13"><path d="M14.2 0 V13 M1.5 2 H12 V4.5 H1.5 Z M5 7.5 H12 V10 H5 Z" fill="none" stroke="#555555" stroke-width="1.1"/></svg>
<svg style="left:1333px;top:39px;" width="13" height="15" viewBox="0 0 13 15"><path d="M0 0.8 H13 M2.5 2.5 H5 V14.5 H2.5 Z M8 2.5 H10.5 V9.5 H8 Z" fill="none" stroke="#555555" stroke-width="1.1"/></svg>
<svg style="left:1355px;top:39px;" width="13" height="15" viewBox="0 0 13 15"><path d="M0 7.5 H13 M2.5 1 H5 V13.5 H2.5 Z M8 4 H10.5 V11 H8 Z" fill="none" stroke="#555555" stroke-width="1.1"/></svg>
<svg style="left:1377px;top:39px;" width="13" height="15" viewBox="0 0 13 15"><path d="M0 14.2 H13 M2.5 1 H5 V12.5 H2.5 Z M8 5.5 H10.5 V12.5 H8 Z" fill="none" stroke="#555555" stroke-width="1.1"/></svg>
<div class="a" style="left:1397px;top:36px;width:1px;height:20px;background:#3c3c3c;"></div>
<svg style="left:1406px;top:40px;" width="15" height="12" viewBox="0 0 15 12"><path d="M0.8 0 V12 M14.2 0 V12 M7.5 2.5 V9.5 M4.5 4 L10.5 8 M10.5 4 L4.5 8" fill="none" stroke="#555555" stroke-width="1.2"/></svg>
<svg style="left:1428px;top:39px;" width="14" height="14" viewBox="0 0 14 14"><path d="M0 0.8 H13 M0 13.2 H13 M6.5 2 V12 M4.5 4 L6.5 2 L8.5 4 M4.5 10 L6.5 12 L8.5 10" fill="none" stroke="#555555" stroke-width="1.1"/></svg>
<svg style="left:1450px;top:39px;" width="14" height="14" viewBox="0 0 14 14"><path d="M0.8 5 V0.8 H5 M9 0.8 H13.2 V5 M13.2 9 V13.2 H9 M5 13.2 H0.8 V9 M1 1 L5 5 M13 1 L9 5 M13 13 L9 9 M1 13 L5 9" fill="none" stroke="#555555" stroke-width="1.1"/></svg>
<svg style="left:1472px;top:39px;" width="16" height="16" viewBox="0 0 16 16"><circle cx="6.5" cy="6.5" r="6" fill="none" stroke="#555555" stroke-width="1.1"/><path d="M10.8 10.8 L15 15 M4 5 V4 H5 M8 4 H9 V5 M9 8 V9 H8 M5 9 H4 V8" fill="none" stroke="#555555" stroke-width="1.1"/></svg>
<div class="a" style="left:1494px;top:36px;width:1px;height:20px;background:#3c3c3c;"></div>
<svg style="left:1503px;top:39px;" width="12" height="14" viewBox="0 0 12 14"><path d="M2 1 H4.5 V13 H2 Z M7.5 1 H10 V13 H7.5 Z M0 4 H12 M0 10 H12 M3.2 0 V1 M8.7 0 V1 M3.2 13 V14 M8.7 13 V14" fill="none" stroke="#555555" stroke-width="1.1"/></svg>
<div class="a" style="left:1682px;top:36px;width:1px;height:20px;background:#3c3c3c;"></div>
<svg style="left:1690px;top:37px;" width="8" height="4" viewBox="0 0 8 4"><path d="M0 0 L3 2 L0 4 Z M4.5 0 L7.5 2 L4.5 4 Z" fill="#d0d0d0"/></svg>
<svg style="left:1690px;top:49px;" width="7" height="6" viewBox="0 0 7 6"><rect x="0.5" y="0" width="6" height="1.2" fill="#d8d8d8"/><path d="M0 2.5 H7 L3.5 6 Z" fill="#d8d8d8"/></svg>
<svg style="left:1702px;top:37px;" width="4" height="18" viewBox="0 0 4 18"><rect x="0" y="0" width="1" height="1" fill="#505050"/><rect x="3" y="1.5" width="1" height="1" fill="#505050"/><rect x="0" y="3" width="1" height="1" fill="#505050"/><rect x="3" y="4.5" width="1" height="1" fill="#505050"/><rect x="0" y="6" width="1" height="1" fill="#505050"/><rect x="3" y="7.5" width="1" height="1" fill="#505050"/><rect x="0" y="9" width="1" height="1" fill="#505050"/><rect x="3" y="10.5" width="1" height="1" fill="#505050"/><rect x="0" y="12" width="1" height="1" fill="#505050"/><rect x="3" y="13.5" width="1" height="1" fill="#505050"/><rect x="0" y="15" width="1" height="1" fill="#505050"/><rect x="3" y="16.5" width="1" height="1" fill="#505050"/></svg>
<svg style="left:1713px;top:37px;" width="8" height="4" viewBox="0 0 8 4"><path d="M0 0 L3 2 L0 4 Z M4.5 0 L7.5 2 L4.5 4 Z" fill="#d0d0d0"/></svg>
<svg style="left:1713px;top:49px;" width="7" height="6" viewBox="0 0 7 6"><rect x="0.5" y="0" width="6" height="1.2" fill="#d8d8d8"/><path d="M0 2.5 H7 L3.5 6 Z" fill="#d8d8d8"/></svg>
<svg style="left:1725px;top:37px;" width="4" height="18" viewBox="0 0 4 18"><rect x="0" y="0" width="1" height="1" fill="#505050"/><rect x="3" y="1.5" width="1" height="1" fill="#505050"/><rect x="0" y="3" width="1" height="1" fill="#505050"/><rect x="3" y="4.5" width="1" height="1" fill="#505050"/><rect x="0" y="6" width="1" height="1" fill="#505050"/><rect x="3" y="7.5" width="1" height="1" fill="#505050"/><rect x="0" y="9" width="1" height="1" fill="#505050"/><rect x="3" y="10.5" width="1" height="1" fill="#505050"/><rect x="0" y="12" width="1" height="1" fill="#505050"/><rect x="3" y="13.5" width="1" height="1" fill="#505050"/><rect x="0" y="15" width="1" height="1" fill="#505050"/><rect x="3" y="16.5" width="1" height="1" fill="#505050"/></svg>
<svg style="left:1736px;top:37px;" width="8" height="4" viewBox="0 0 8 4"><path d="M0 0 L3 2 L0 4 Z M4.5 0 L7.5 2 L4.5 4 Z" fill="#d0d0d0"/></svg>
<svg style="left:1736px;top:49px;" width="7" height="6" viewBox="0 0 7 6"><rect x="0.5" y="0" width="6" height="1.2" fill="#d8d8d8"/><path d="M0 2.5 H7 L3.5 6 Z" fill="#d8d8d8"/></svg>
<svg style="left:1748px;top:37px;" width="4" height="18" viewBox="0 0 4 18"><rect x="0" y="0" width="1" height="1" fill="#505050"/><rect x="3" y="1.5" width="1" height="1" fill="#505050"/><rect x="0" y="3" width="1" height="1" fill="#505050"/><rect x="3" y="4.5" width="1" height="1" fill="#505050"/><rect x="0" y="6" width="1" height="1" fill="#505050"/><rect x="3" y="7.5" width="1" height="1" fill="#505050"/><rect x="0" y="9" width="1" height="1" fill="#505050"/><rect x="3" y="10.5" width="1" height="1" fill="#505050"/><rect x="0" y="12" width="1" height="1" fill="#505050"/><rect x="3" y="13.5" width="1" height="1" fill="#505050"/><rect x="0" y="15" width="1" height="1" fill="#505050"/><rect x="3" y="16.5" width="1" height="1" fill="#505050"/></svg>
<svg style="left:1759px;top:37px;" width="8" height="4" viewBox="0 0 8 4"><path d="M0 0 L3 2 L0 4 Z M4.5 0 L7.5 2 L4.5 4 Z" fill="#d0d0d0"/></svg>
<svg style="left:1759px;top:49px;" width="7" height="6" viewBox="0 0 7 6"><rect x="0.5" y="0" width="6" height="1.2" fill="#d8d8d8"/><path d="M0 2.5 H7 L3.5 6 Z" fill="#d8d8d8"/></svg>
<svg style="left:1787px;top:42px;" width="14" height="14" viewBox="0 0 14 14"><path d="M0.8 6 V13.2 H12.2 V10.5" fill="none" stroke="#dadada" stroke-width="1.2"/><path d="M3.5 10 C3.5 6 6 4.2 9.5 4.2 V1.5 L13.5 5.5 L9.5 9.5 V7 C7 7 5 8 3.5 10 Z" fill="none" stroke="#dadada" stroke-width="1.1"/></svg>
<svg style="left:1885px;top:39px;" width="15" height="15" viewBox="0 0 15 15"><path d="M5 3.5 V0.5 H14.5 V7.5 H12 L11 9.5 L10 7.5" fill="#3a3a3a" stroke="#dadada" stroke-width="1"/><circle cx="5.5" cy="7.5" r="2.7" fill="#1f1f1f" stroke="#dadada" stroke-width="1.1"/><path d="M0.8 14.5 C1.5 11.5 3.5 10.5 5.5 10.5 C7.5 10.5 9.5 11.5 10.2 14.5" fill="none" stroke="#dadada" stroke-width="1.1"/></svg>
<svg style="left:893px;top:9px;" width="13" height="13" viewBox="0 0 13 13"><circle cx="8.5" cy="4.5" r="3.6" fill="none" stroke="#d0d0d0" stroke-width="1.6"/><path d="M6 7 L1 12" stroke="#d0d0d0" stroke-width="2.2" stroke-linecap="round"/></svg>
<svg style="left:1745px;top:8px;" width="15" height="14" viewBox="0 0 15 14"><path d="M3.5 0.5 V5 M1.2 2.8 H5.8" stroke="#6ec46e" stroke-width="1.1"/><circle cx="9" cy="6" r="3" fill="none" stroke="#dadada" stroke-width="1.1"/><path d="M4 13.5 C4.5 10.5 6.5 9.5 9 9.5 C11.5 9.5 13.5 10.5 14 13.5" fill="none" stroke="#dadada" stroke-width="1.1"/></svg>
<svg style="left:172px;top:81px;" width="7" height="4" viewBox="0 0 7 4"><path d="M0 0 H7 L3.5 4 Z" fill="#d0d0d0"/></svg>
<svg style="left:188px;top:78px;" width="8" height="11" viewBox="0 0 8 11"><path d="M2 0.5 H6 V6 H7.5 V7 H0.5 V6 H2 Z" fill="none" stroke="#d8d8d8" stroke-width="1"/><path d="M4 7 V11" stroke="#d8d8d8" stroke-width="1.2"/><path d="M4.5 1 V6" stroke="#d8d8d8" stroke-width="1"/></svg>
<svg style="left:203px;top:78.5px;" width="9" height="9" viewBox="0 0 9 9"><path d="M0.5 0.5 L8.5 8.5 M8.5 0.5 L0.5 8.5" stroke="#d8d8d8" stroke-width="1.3"/></svg>
<svg style="left:191px;top:98px;" width="13" height="13" viewBox="0 0 13 13"><circle cx="8.5" cy="4.5" r="3.6" fill="none" stroke="#d0d0d0" stroke-width="1.6"/><path d="M6 7 L1 12" stroke="#d0d0d0" stroke-width="2.2" stroke-linecap="round"/></svg>
<svg style="left:207px;top:102px;" width="6" height="3.5" viewBox="0 0 6 3.5"><path d="M0 0 H6 L3.0 3.5 Z" fill="#d0d0d0"/></svg>
<svg style="left:206px;top:123px;" width="10" height="6" viewBox="0 0 10 6"><path d="M0 6 L5 0 L10 6 Z" fill="#9a9a9a"/></svg>
<svg style="left:206px;top:997px;" width="10" height="6" viewBox="0 0 10 6"><path d="M0 0 L5 6 L10 0 Z" fill="#9a9a9a"/></svg>
<svg style="left:436px;top:78px;" width="9" height="9" viewBox="0 0 9 9"><path d="M0.5 4.5 H3 M3 1.5 V7.5 M3 2.5 H8 V6.5 H3" fill="none" stroke="#e0e0e0" stroke-width="1"/></svg>
<svg style="left:454px;top:78px;" width="9" height="9" viewBox="0 0 9 9"><path d="M0.5 0.5 L8.5 8.5 M8.5 0.5 L0.5 8.5" stroke="#e0e0e0" stroke-width="1.2"/></svg>
<svg style="left:1656px;top:81.5px;" width="7" height="4" viewBox="0 0 7 4"><path d="M0 0 H7 L3.5 4 Z" fill="#d0d0d0"/></svg>
<svg style="left:1673px;top:76px;" width="11" height="11" viewBox="0 0 11 11"><path d="M5.50 0.20 L6.53 0.30 L6.99 1.90 L7.67 2.26 L9.25 1.75 L9.91 2.56 L9.10 4.01 L9.33 4.74 L10.80 5.50 L10.70 6.53 L9.10 6.99 L8.74 7.67 L9.25 9.25 L8.44 9.91 L6.99 9.10 L6.26 9.33 L5.50 10.80 L4.47 10.70 L4.01 9.10 L3.33 8.74 L1.75 9.25 L1.09 8.44 L1.90 6.99 L1.67 6.26 L0.20 5.50 L0.30 4.47 L1.90 4.01 L2.26 3.33 L1.75 1.75 L2.56 1.09 L4.01 1.90 L4.74 1.67 Z M7.3 5.5 A1.8 1.8 0 1 0 3.7 5.5 A1.8 1.8 0 1 0 7.3 5.5 Z" fill="#d8d8d8" fill-rule="evenodd"/></svg>
<svg style="left:231px;top:99px;" width="13" height="9" viewBox="0 0 13 9"><path d="M0.5 0.5 H12.5 V8.5 H0.5 Z M4.5 2.5 L2.5 4.5 L4.5 6.5 M8.5 2.5 L10.5 4.5 L8.5 6.5" fill="none" stroke="#e0e0e0" stroke-width="1"/></svg>
<svg style="left:923px;top:99px;" width="13" height="9" viewBox="0 0 13 9"><path d="M0.5 0.5 H12.5 V8.5 H0.5 Z M4.5 2.5 L2.5 4.5 L4.5 6.5 M8.5 2.5 L10.5 4.5 L8.5 6.5" fill="none" stroke="#e0e0e0" stroke-width="1"/></svg>
<svg style="left:905px;top:103.5px;" width="6" height="3.5" viewBox="0 0 6 3.5"><path d="M0 0 H6 L3.0 3.5 Z" fill="#d0d0d0"/></svg>
<svg style="left:1596px;top:103.5px;" width="6" height="3.5" viewBox="0 0 6 3.5"><path d="M0 0 H6 L3.0 3.5 Z" fill="#d0d0d0"/></svg>
<svg style="left:1640px;top:97px;" width="11" height="14" viewBox="0 0 11 14"><path d="M0 5 H11 M0 7.5 H11 M5.5 0.5 V4 M5.5 8.5 V13.5 M3.5 2.5 L5.5 0.5 L7.5 2.5 M3.5 11.5 L5.5 13.5 L7.5 11.5" fill="none" stroke="#e0e0e0" stroke-width="1.1"/></svg>
<svg style="left:1640px;top:119px;" width="12" height="11" viewBox="0 0 12 11"><path d="M6 0.5 L11.5 10.5 H0.5 Z" fill="#f5c400" stroke="#f5c400" stroke-width="1" stroke-linejoin="round"/><path d="M6 3.5 V7 M6 8.3 V9.3" stroke="#1e1e1e" stroke-width="1.3"/></svg>
<svg style="left:1641px;top:138px;" width="10" height="5" viewBox="0 0 10 5"><path d="M0 5 L5 0 L10 5 Z" fill="#9a9a9a"/></svg>
<svg style="left:1641px;top:674px;" width="10" height="5" viewBox="0 0 10 5"><path d="M0 0 L5 5 L10 0 Z" fill="#9a9a9a"/></svg>
<svg style="left:277px;top:689px;" width="6" height="3.5" viewBox="0 0 6 3.5"><path d="M0 0 H6 L3.0 3.5 Z" fill="#d0d0d0"/></svg>
<div class="a" style="left:287px;top:683px;width:1px;height:14px;background:#2d2d2d;"></div>
<svg style="left:292px;top:686px;" width="5" height="8" viewBox="0 0 5 8"><path d="M5 0 L0 4 L5 8 Z" fill="#9a9a9a"/></svg>
<svg style="left:1479px;top:686px;" width="5" height="8" viewBox="0 0 5 8"><path d="M0 0 L5 4 L0 8 Z" fill="#9a9a9a"/></svg>
<div class="a" style="left:1603px;top:683px;width:37px;height:15px;border:1px solid #3a3a3a;"></div>
<div class="a" style="left:1640px;top:683px;width:45px;height:15px;border:1px solid #3a3a3a;"></div>
<svg style="left:236px;top:699px;" width="130" height="22" viewBox="0 0 130 22"><path d="M0 1 H64 L50 19 H0 Z" fill="#3a3a3a"/></svg>
<svg style="left:340px;top:699px;" width="70" height="22" viewBox="0 0 70 22"><path d="M14 1 H67 V21 H0 Z" fill="#333333"/></svg>
<div class="t" style="left:255px;top:702.84px;font-size:12px;color:#e8e8e8;font-family:'Liberation Sans',sans-serif;">XAML</div>
<div class="t" style="left:366px;top:706.84px;font-size:12px;color:#e8e8e8;font-family:'Liberation Sans',sans-serif;">Design</div>
<svg style="left:242px;top:703px;" width="10" height="10" viewBox="0 0 10 10"><path d="M0.5 0.5 H9.5 V9.5 H0.5 Z M3.8 3.2 L2.5 5 L3.8 6.8 M6.2 3.2 L7.5 5 L6.2 6.8" fill="none" stroke="#e0e0e0" stroke-width="1"/></svg>
<svg style="left:314px;top:702px;" width="13" height="12" viewBox="0 0 13 12"><path d="M3.5 11.5 V1 M1 3.5 L3.5 1 L6 3.5 M9.5 0.5 V11 M7 8.5 L9.5 11 L12 8.5" fill="none" stroke="#e8e8e8" stroke-width="1.3"/></svg>
<svg style="left:352px;top:705px;" width="14" height="13" viewBox="0 0 14 13"><path d="M0.5 0.5 H10.5 V8 M0.5 0.5 V11.5 H7" fill="none" stroke="#e0e0e0" stroke-width="1"/><rect x="2.5" y="2.5" width="6" height="6" fill="#bdbdbd"/><circle cx="10.5" cy="10" r="2.6" fill="#2b2b2b" stroke="#e0e0e0" stroke-width="1"/></svg>
<svg style="left:415px;top:703px;" width="13" height="13" viewBox="0 0 13 13"><path d="M5 1.5 H0.5 V12 H11 V7" fill="none" stroke="#e0e0e0" stroke-width="1.1"/><path d="M6 7 L12 1 M8 0.8 H12.2 V5" fill="none" stroke="#4da3f0" stroke-width="1.3"/></svg>
<svg style="left:1639px;top:703px;" width="46" height="15" viewBox="0 0 46 15"><path d="M0.5 1.5 H10.5 V13.5 H0.5 Z M5.5 3.5 V11.5 M15.5 1.5 H25.5 V13.5 H15.5 Z M17.5 7.5 H23.5 M30.5 1.5 H40.5 V13.5 H30.5 Z M32.5 4 L35.5 6.5 L38.5 4 M32.5 7.5 L35.5 10 L38.5 7.5" fill="none" stroke="#ffffff" stroke-width="1.2"/><path d="M13.5 0 H27.5 V15 H13.5 Z" fill="none" stroke="#555" stroke-width="1"/></svg>
<svg style="left:1672px;top:726px;" width="10" height="5" viewBox="0 0 10 5"><path d="M0 5 L5 0 L10 5 Z" fill="#9a9a9a"/></svg>
<svg style="left:1672px;top:981px;" width="10" height="5" viewBox="0 0 10 5"><path d="M0 0 L5 5 L10 0 Z" fill="#9a9a9a"/></svg>
<svg style="left:279px;top:998px;" width="6" height="3.5" viewBox="0 0 6 3.5"><path d="M0 0 H6 L3.0 3.5 Z" fill="#d0d0d0"/></svg>
<div class="a" style="left:276px;top:992px;width:1px;height:17px;background:#2d2d2d;"></div>
<svg style="left:297px;top:994px;" width="10" height="12" viewBox="0 0 10 12"><path d="M8 6.5 A3.2 3.2 0 1 1 5 3.2 M4 1 L6 3.2 L4 5.4" fill="none" stroke="#e0e0e0" stroke-width="1.6"/></svg>
<div class="a" style="left:312px;top:992px;width:22px;height:17px;border:1px solid #7160e8;"></div>
<div class="a" style="left:404px;top:992px;width:22px;height:17px;border:1px solid #7160e8;"></div>
<div class="a" style="left:427px;top:992px;width:22px;height:17px;border:1px solid #7160e8;"></div>
<div class="t" style="left:316px;top:994.00px;font-size:13px;color:#e0e0e0;font-family:'Liberation Sans',sans-serif;font-family:'Liberation Serif',serif;font-style:italic;">fx</div>
<svg style="left:339px;top:996px;" width="15" height="10" viewBox="0 0 15 10"><path d="M0 0 H4 V4 H0 Z M5.5 0 H9.5 V4 H5.5 Z M11 0 H15 V4 H11 Z M0 5.5 H4 V9.5 H0 Z M5.5 5.5 H9.5 V9.5 H5.5 Z M11 5.5 H15 V9.5 H11 Z" fill="#e0e0e0"/></svg>
<svg style="left:361px;top:996px;" width="15" height="10" viewBox="0 0 15 10"><path d="M0.5 0.5 H4 M11 0.5 H14.5 V4 M14.5 6 V9.5 H11 M4 9.5 H0.5 V6 M0.5 4 V0.5" fill="none" stroke="#e0e0e0" stroke-width="1"/><circle cx="6" cy="5" r="2.5" fill="none" stroke="#e0e0e0" stroke-width="1.4"/><rect x="10" y="3" width="4" height="4" fill="#e0e0e0"/><rect x="1" y="3" width="2" height="4" fill="#e0e0e0"/></svg>
<svg style="left:386px;top:995px;" width="12" height="12" viewBox="0 0 12 12"><rect x="0" y="0" width="12" height="11" fill="#c0c0c0"/><path d="M0 0 H3 V3 H0 Z M6 3 H9 V6 H6 Z M3 3 H6 V6 H3 Z M9 6 H12 V9 H9 Z M6 6 H9 V9 H6 Z M3 0 H6 V3 H3 Z" fill="#6a6a6a"/></svg>
<svg style="left:408px;top:994px;" width="14" height="13" viewBox="0 0 14 13"><path d="M0 6.5 H14 M7 0 V13" stroke="#e0e0e0" stroke-width="1.1"/><circle cx="7" cy="6.5" r="2.2" fill="#2d2d2d" stroke="#e0e0e0" stroke-width="1.2"/></svg>
<svg style="left:431px;top:993px;" width="14" height="15" viewBox="0 0 14 15"><path d="M3.5 10 V1 H9 L11.5 3.5 V10" fill="none" stroke="#e0e0e0" stroke-width="1"/><path d="M6 5 L4.5 6.5 L6 8 M8 4 V7 H6" fill="none" stroke="#e0e0e0" stroke-width="0.9"/><path d="M2.5 10.5 L1 12.3 L2.5 14 M11 10.5 L12.5 12.3 L11 14" fill="none" stroke="#e0e0e0" stroke-width="1"/><rect x="5" y="10.5" width="4" height="4" fill="#4da3f0"/></svg>
<svg style="left:456px;top:996px;" width="5" height="8" viewBox="0 0 5 8"><path d="M5 0 L0 4 L5 8 Z" fill="#9a9a9a"/></svg>
<svg style="left:1656px;top:996px;" width="5" height="8" viewBox="0 0 5 8"><path d="M0 0 L5 4 L0 8 Z" fill="#9a9a9a"/></svg>
<svg style="left:1698px;top:977px;" width="5" height="8" viewBox="0 0 5 8"><path d="M5 0 L0 4 L5 8 Z" fill="#9a9a9a"/></svg>
<svg style="left:1902px;top:977px;" width="5" height="8" viewBox="0 0 5 8"><path d="M0 0 L5 4 L0 8 Z" fill="#9a9a9a"/></svg>
<div class="a" style="left:344px;top:117.5px;width:7px;height:1.6px;background:#a0a0a0;"></div>
<div class="a" style="left:226px;top:682px;width:1px;height:329px;background:#3a3a3a;"></div>
<div class="a" style="left:1685px;top:682px;width:1px;height:329px;background:#3a3a3a;"></div>
<div class="a" style="left:226px;top:1010px;width:1460px;height:1px;background:#3a3a3a;"></div>
<div class="a" style="left:31px;top:1011px;width:190px;height:6px;background:#1f1f1f;"></div>
<div class="a" style="left:31px;top:1010px;width:189px;height:1px;background:#3a3a3a;"></div>
<div class="a" style="left:1685px;top:94px;width:1px;height:588px;background:#3a3a3a;"></div>
</body></html>
